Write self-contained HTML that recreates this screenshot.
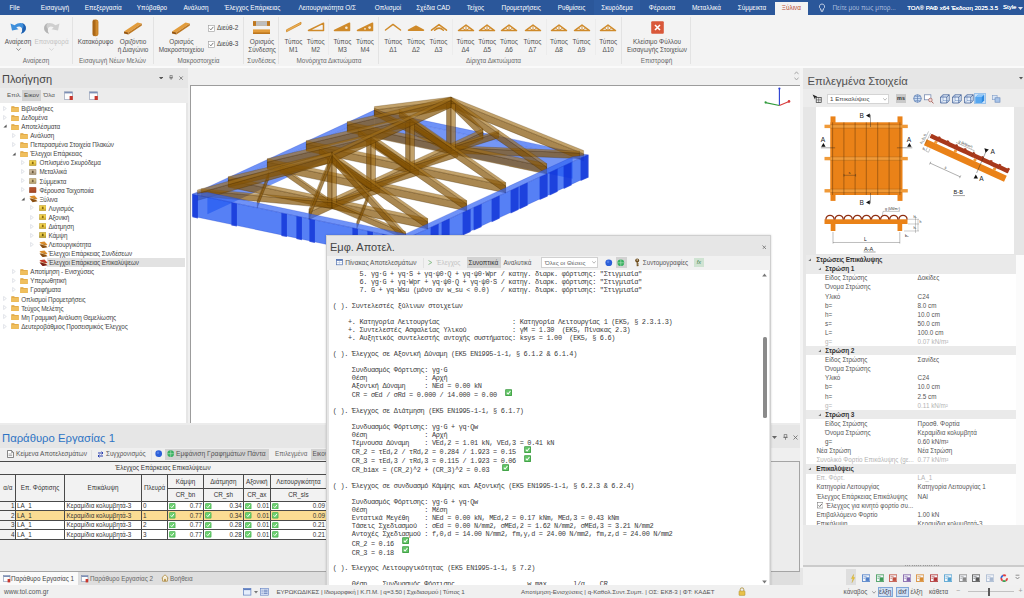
<!DOCTYPE html>
<html lang="el"><head><meta charset="utf-8"><title>ΤΟΛ ΡΑΦ</title><style>
html,body{margin:0;padding:0}
body{width:1024px;height:598px;overflow:hidden;position:relative;background:#e6e6e6;font-family:"Liberation Sans",sans-serif;}
.b{position:absolute;box-sizing:border-box;overflow:hidden}
.t{position:absolute;white-space:nowrap}
.m{position:absolute;white-space:pre;font-family:"Liberation Mono",monospace}
svg{display:block}
svg text{font-family:"Liberation Sans",sans-serif}
</style></head><body>
<div class="b" style="left:0px;top:0px;width:1024px;height:15px;background:#2b579a;"></div>
<div class="b" style="left:594px;top:0px;width:46px;height:15px;background:#2e5ca1;"></div>
<div class="t" style="top:3.6px;font-size:6.4px;line-height:8.0px;color:#fff;left:14.6px;transform:translateX(-50%);">File</div>
<div class="t" style="top:3.6px;font-size:6.4px;line-height:8.0px;color:#fff;left:55px;transform:translateX(-50%);">Εισαγωγή</div>
<div class="t" style="top:3.6px;font-size:6.4px;line-height:8.0px;color:#fff;left:103.2px;transform:translateX(-50%);">Επεξεργασία</div>
<div class="t" style="top:3.6px;font-size:6.4px;line-height:8.0px;color:#fff;left:152px;transform:translateX(-50%);">Υπόβαθρο</div>
<div class="t" style="top:3.6px;font-size:6.4px;line-height:8.0px;color:#fff;left:196px;transform:translateX(-50%);">Ανάλυση</div>
<div class="t" style="top:3.6px;font-size:6.4px;line-height:8.0px;color:#fff;left:252.4px;transform:translateX(-50%);">Έλεγχος Επάρκειας</div>
<div class="t" style="top:3.6px;font-size:6.4px;line-height:8.0px;color:#fff;left:327.2px;transform:translateX(-50%);">Λειτουργικότητα Ο/Σ</div>
<div class="t" style="top:3.6px;font-size:6.4px;line-height:8.0px;color:#fff;left:388px;transform:translateX(-50%);">Οπλισμοί</div>
<div class="t" style="top:3.6px;font-size:6.4px;line-height:8.0px;color:#fff;left:433.2px;transform:translateX(-50%);">Σχέδια CAD</div>
<div class="t" style="top:3.6px;font-size:6.4px;line-height:8.0px;color:#fff;left:475.5px;transform:translateX(-50%);">Τείχος</div>
<div class="t" style="top:3.6px;font-size:6.4px;line-height:8.0px;color:#fff;left:521.2px;transform:translateX(-50%);">Προμετρήσεις</div>
<div class="t" style="top:3.6px;font-size:6.4px;line-height:8.0px;color:#fff;left:571.5px;transform:translateX(-50%);">Ρυθμίσεις</div>
<div class="t" style="top:3.6px;font-size:6.4px;line-height:8.0px;color:#fff;left:617px;transform:translateX(-50%);">Σκυρόδεμα</div>
<div class="t" style="top:3.6px;font-size:6.4px;line-height:8.0px;color:#fff;left:662px;transform:translateX(-50%);">Φέρουσα</div>
<div class="t" style="top:3.6px;font-size:6.4px;line-height:8.0px;color:#fff;left:706.4px;transform:translateX(-50%);">Μεταλλικά</div>
<div class="t" style="top:3.6px;font-size:6.4px;line-height:8.0px;color:#fff;left:752px;transform:translateX(-50%);">Σύμμεικτα</div>
<div class="b" style="left:774.5px;top:1.5px;width:33px;height:14px;background:#f3f3f3;"></div>
<div class="t" style="top:3.8px;font-size:6.4px;line-height:8.0px;color:#b5482f;left:791.4px;transform:translateX(-50%);">Ξύλινα</div>
<svg class="b" style="left:818px;top:3px" width="8" height="10" viewBox="0 0 8 10"><path d="M4 1a2.6 2.6 0 0 0-1.4 4.8v1.4h2.8V5.8A2.6 2.6 0 0 0 4 1zM2.9 8.3h2.2" fill="none" stroke="#dfe6f3" stroke-width=".8"/></svg>
<div class="t" style="top:3.8px;font-size:6.4px;line-height:8.0px;color:#a9bbdd;left:832.5px;">Πείτε μου πως μπορ...</div>
<div class="t" style="top:4.0px;font-size:6.08px;line-height:7.6px;color:#fff;left:907.2px;letter-spacing:0px;text-shadow:0 0 .3px #fff;">ΤΟΛ® ΡΑΦ x64 Έκδοση 2025.3.5</div>
<div class="t" style="top:4.05px;font-size:6px;line-height:7.5px;color:#fff;left:1003px;text-shadow:0 0 .3px #fff;">Style</div>
<svg class="b" style="left:1017.5px;top:6.5px" width="5" height="3" viewBox="0 0 5 3"><path d="M0 0h5L2.5 3z" fill="#dfe6f3"/></svg>
<div class="b" style="left:0px;top:15px;width:1024px;height:51px;background:#f3f3f3;"></div>
<div class="b" style="left:0px;top:66px;width:1024px;height:1.5px;background:#fafafa;"></div>
<div class="b" style="left:72.0px;top:17px;width:1px;height:47px;background:#e3e3e3;"></div>
<div class="b" style="left:152.5px;top:17px;width:1px;height:47px;background:#e3e3e3;"></div>
<div class="b" style="left:243.1px;top:17px;width:1px;height:47px;background:#e3e3e3;"></div>
<div class="b" style="left:278.0px;top:17px;width:1px;height:47px;background:#e3e3e3;"></div>
<div class="b" style="left:378.3px;top:17px;width:1px;height:47px;background:#e3e3e3;"></div>
<div class="b" style="left:620.7px;top:17px;width:1px;height:47px;background:#e3e3e3;"></div>
<div class="b" style="left:689.5px;top:17px;width:1px;height:47px;background:#e3e3e3;"></div>
<div class="b" style="left:328.2px;top:19px;width:1px;height:36px;background:#ececec;"></div>
<div class="b" style="left:451.5px;top:19px;width:1px;height:36px;background:#ececec;"></div>
<div class="b" style="left:545.5px;top:19px;width:1px;height:36px;background:#ececec;"></div>
<div class="b" style="left:594.5px;top:19px;width:1px;height:36px;background:#ececec;"></div>
<div class="t" style="top:56.6px;font-size:6.4px;line-height:8.0px;color:#6a6a6a;left:36px;transform:translateX(-50%);">Αναίρεση</div>
<div class="t" style="top:56.6px;font-size:6.4px;line-height:8.0px;color:#6a6a6a;left:112.5px;transform:translateX(-50%);">Εισαγωγή Νέων Μελών</div>
<div class="t" style="top:56.6px;font-size:6.4px;line-height:8.0px;color:#6a6a6a;left:198.5px;transform:translateX(-50%);">Μακροστοιχεία</div>
<div class="t" style="top:56.6px;font-size:6.4px;line-height:8.0px;color:#6a6a6a;left:261.5px;transform:translateX(-50%);">Συνδέσεις</div>
<div class="t" style="top:56.6px;font-size:6.4px;line-height:8.0px;color:#6a6a6a;left:329px;transform:translateX(-50%);">Μονόριχτα Δικτυώματα</div>
<div class="t" style="top:56.6px;font-size:6.4px;line-height:8.0px;color:#6a6a6a;left:493.5px;transform:translateX(-50%);">Δίριχτα Δικτυώματα</div>
<div class="t" style="top:56.6px;font-size:6.4px;line-height:8.0px;color:#6a6a6a;left:656.5px;transform:translateX(-50%);">Επιστροφή</div>
<svg class="b" style="left:9px;top:20.5px" width="20" height="15" viewBox="0 0 20 15">
<path d="M1.5 2.5 L3 9.5 L9.5 8.2 L7.3 6.6 C9.5 4.6 12.6 5.2 13.2 8 C13.6 10 12.8 11.8 11.8 12.8 C15.6 11.6 17.6 8.6 16.6 5.4 C15.4 1.6 10.2 0.4 5.6 4.2 Z" fill="#3f8fdb"/>
<path d="M13.2 8 C13.6 10 12.8 11.8 11.8 12.8 C15.6 11.6 17.6 8.6 16.6 5.4 C16 3.6 14.6 2.4 13 2 C15 4 15 6 13.2 8Z" fill="#1f5fae"/></svg>
<svg class="b" style="left:42px;top:20.5px" width="20" height="15" viewBox="0 0 20 15">
<path d="M17.5 2.5 L16 9.5 L9.5 8.2 L11.7 6.6 C9.5 4.6 6.4 5.2 5.8 8 C5.4 10 6.2 11.8 7.2 12.8 C3.4 11.6 1.4 8.6 2.4 5.4 C3.6 1.6 8.8 0.4 13.4 4.2 Z" fill="#cfcfcf"/>
<path d="M5.8 8 C5.4 10 6.2 11.8 7.2 12.8 C3.4 11.6 1.4 8.6 2.4 5.4 C3 3.6 4.4 2.4 6 2 C4 4 4 6 5.8 8Z" fill="#b4b4b4"/></svg>
<div class="t" style="top:38.0px;font-size:6.4px;line-height:8.0px;color:#505050;left:18px;transform:translateX(-50%);">Αναίρεση</div>
<div class="t" style="top:38.0px;font-size:6.4px;line-height:8.0px;color:#c4c4c4;left:51.5px;transform:translateX(-50%);">Επαναφορά</div>
<svg class="b" style="left:15.5px;top:48px" width="5" height="3" viewBox="0 0 5 3"><path d="M.3 .3L2.5 2.4L4.7 .3" fill="none" stroke="#666" stroke-width=".7"/></svg>
<svg class="b" style="left:49px;top:48px" width="5" height="3" viewBox="0 0 5 3"><path d="M.3 .3L2.5 2.4L4.7 .3" fill="none" stroke="#ccc" stroke-width=".7"/></svg>
<svg class="b" style="left:91px;top:19px" width="9" height="18" viewBox="0 0 9 18">
<rect x="1.6" y=".6" width="5.8" height="16.6" rx="2.6" fill="#bd7720"/><rect x="1.6" y=".6" width="2.2" height="16.6" rx="1.6" fill="#96560f" opacity=".55"/><rect x="5.2" y="1.5" width="1.4" height="15" rx=".7" fill="#e29c3c" opacity=".6"/></svg>
<svg class="b" style="left:123px;top:20.5px" width="20" height="15" viewBox="0 0 20 15">
<path d="M1 10.5 L14.5 1.5 L18.8 2.6 L5.4 11.6Z" fill="#e29c3c"/><path d="M1 10.5 L5.4 11.6 L5.4 13.6 L1 12.4Z" fill="#96560f"/><path d="M5.4 11.6 L18.8 2.6 L18.8 4.6 L5.4 13.6Z" fill="#bd7720"/></svg>
<svg class="b" style="left:171px;top:20.5px" width="20" height="15" viewBox="0 0 20 15">
<path d="M1 10.5 L14.5 1.5 L18.8 2.6 L5.4 11.6Z" fill="#e29c3c"/><path d="M1 10.5 L5.4 11.6 L5.4 13.6 L1 12.4Z" fill="#96560f"/><path d="M5.4 11.6 L18.8 2.6 L18.8 4.6 L5.4 13.6Z" fill="#bd7720"/></svg>
<div class="t" style="top:38.0px;font-size:6.4px;line-height:8.0px;color:#505050;left:95.5px;transform:translateX(-50%);">Κατακόρυφο</div>
<div class="t" style="top:38.0px;font-size:6.4px;line-height:8.0px;color:#505050;left:133px;transform:translateX(-50%);">Οριζόντιο</div>
<div class="t" style="top:46.0px;font-size:6.4px;line-height:8.0px;color:#505050;left:133px;transform:translateX(-50%);">ή Διαγώνιο</div>
<div class="t" style="top:38.0px;font-size:6.4px;line-height:8.0px;color:#505050;left:181.4px;transform:translateX(-50%);">Ορισμός</div>
<div class="t" style="top:45.8px;font-size:6.4px;line-height:8.0px;color:#505050;left:181.4px;transform:translateX(-50%);">Μακροστοιχείου</div>
<svg class="b" style="left:208px;top:24.5px" width="7" height="7" viewBox="0 0 7 7"><rect x=".4" y=".4" width="6" height="6" fill="#fff" stroke="#9a9a9a" stroke-width=".6"/><path d="M1.6 3.5L2.9 4.8L5.3 1.9" fill="none" stroke="#555" stroke-width=".8"/></svg>
<div class="t" style="top:23.8px;font-size:6.4px;line-height:8.0px;color:#444;left:217px;">Διεύθ-2</div>
<svg class="b" style="left:208px;top:40.900000000000006px" width="7" height="7" viewBox="0 0 7 7"><rect x=".4" y=".4" width="6" height="6" fill="#fff" stroke="#9a9a9a" stroke-width=".6"/><path d="M1.6 3.5L2.9 4.8L5.3 1.9" fill="none" stroke="#555" stroke-width=".8"/></svg>
<div class="t" style="top:40.2px;font-size:6.4px;line-height:8.0px;color:#444;left:217px;">Διεύθ-3</div>
<svg class="b" style="left:252px;top:20px" width="19" height="16" viewBox="0 0 19 16">
<rect x="1" y="1.2" width="17" height="4.6" fill="#e29c3c"/><rect x="4" y="1.2" width="11" height="4.6" fill="#bdbdbd"/><rect x="1" y="1.2" width="3" height="4.6" fill="#bd7720"/><rect x="15" y="1.2" width="3" height="4.6" fill="#bd7720"/>
<rect x="1" y="9.4" width="17" height="4.6" fill="#e29c3c"/><rect x="1" y="12.4" width="17" height="1.6" fill="#bd7720"/></svg>
<div class="t" style="top:38.0px;font-size:6.4px;line-height:8.0px;color:#505050;left:262px;transform:translateX(-50%);">Ορισμός</div>
<div class="t" style="top:45.8px;font-size:6.4px;line-height:8.0px;color:#505050;left:262px;transform:translateX(-50%);">Σύνδεσης</div>
<svg class="b" style="left:284.5px;top:20px" width="18" height="14" viewBox="0 0 18 14"><path d="M1.5 9.8L16 2.2L16 4.2L1.5 11.8Z" fill="#eeb055" stroke="#cf8a2a" stroke-width=".8"/></svg>
<div class="t" style="top:38.0px;font-size:6.4px;line-height:8.0px;color:#505050;left:293.5px;transform:translateX(-50%);">Τύπος</div>
<div class="t" style="top:45.8px;font-size:6.4px;line-height:8.0px;color:#505050;left:293.5px;transform:translateX(-50%);">M1</div>
<svg class="b" style="left:306.7px;top:20px" width="18" height="14" viewBox="0 0 18 14"><path d="M1.5 10.5L16.5 3.2V10.5Z" stroke="#cf8a2a" stroke-width="1.5" fill="none" stroke-linejoin="round" stroke-linecap="round"/></svg>
<div class="t" style="top:38.0px;font-size:6.4px;line-height:8.0px;color:#505050;left:315.7px;transform:translateX(-50%);">Τύπος</div>
<div class="t" style="top:45.8px;font-size:6.4px;line-height:8.0px;color:#505050;left:315.7px;transform:translateX(-50%);">M2</div>
<svg class="b" style="left:333.4px;top:20px" width="18" height="14" viewBox="0 0 18 14"><path d="M1.5 10.5L16.5 3.2V10.5Z" fill="#cf8a2a" stroke="#cf8a2a" stroke-width="1.5"  stroke-linejoin="round" stroke-linecap="round"/><circle cx="13.4" cy="7.8" r="1.3" fill="#f6ead6"/></svg>
<div class="t" style="top:38.0px;font-size:6.4px;line-height:8.0px;color:#505050;left:342.4px;transform:translateX(-50%);">Τύπος</div>
<div class="t" style="top:45.8px;font-size:6.4px;line-height:8.0px;color:#505050;left:342.4px;transform:translateX(-50%);">M3</div>
<svg class="b" style="left:356px;top:20px" width="18" height="14" viewBox="0 0 18 14"><path d="M1.5 10.5L16.5 3.2V10.5Z" fill="#cf8a2a" stroke="#cf8a2a" stroke-width="1.5"  stroke-linejoin="round" stroke-linecap="round"/><circle cx="13.6" cy="7.6" r="1.3" fill="#f6ead6"/><circle cx="9" cy="8.8" r=".9" fill="#f6ead6"/></svg>
<div class="t" style="top:38.0px;font-size:6.4px;line-height:8.0px;color:#505050;left:365px;transform:translateX(-50%);">Τύπος</div>
<div class="t" style="top:45.8px;font-size:6.4px;line-height:8.0px;color:#505050;left:365px;transform:translateX(-50%);">M4</div>
<svg class="b" style="left:384.2px;top:20px" width="18" height="14" viewBox="0 0 18 14"><path d="M1.5 10L9 4.4L16.5 10" stroke="#cf8a2a" stroke-width="1.5" fill="none" stroke-linejoin="round" stroke-linecap="round"/></svg>
<div class="t" style="top:38.0px;font-size:6.4px;line-height:8.0px;color:#505050;left:393.2px;transform:translateX(-50%);">Τύπος</div>
<div class="t" style="top:45.8px;font-size:6.4px;line-height:8.0px;color:#505050;left:393.2px;transform:translateX(-50%);">Δ1</div>
<svg class="b" style="left:407px;top:20px" width="18" height="14" viewBox="0 0 18 14"><path d="M1.5 10.2L9 6.2L16.5 10.2Z" fill="#cf8a2a" stroke="#cf8a2a" stroke-width="1.5"  stroke-linejoin="round" stroke-linecap="round"/></svg>
<div class="t" style="top:38.0px;font-size:6.4px;line-height:8.0px;color:#505050;left:416px;transform:translateX(-50%);">Τύπος</div>
<div class="t" style="top:45.8px;font-size:6.4px;line-height:8.0px;color:#505050;left:416px;transform:translateX(-50%);">Δ2</div>
<svg class="b" style="left:429.5px;top:20px" width="18" height="14" viewBox="0 0 18 14"><path d="M1.5 10.2L9 4.6L16.5 10.2M4.6 10.2Q9 6 13.4 10.2" stroke="#cf8a2a" stroke-width="1.5" fill="none" stroke-linejoin="round" stroke-linecap="round"/></svg>
<div class="t" style="top:38.0px;font-size:6.4px;line-height:8.0px;color:#505050;left:438.5px;transform:translateX(-50%);">Τύπος</div>
<div class="t" style="top:45.8px;font-size:6.4px;line-height:8.0px;color:#505050;left:438.5px;transform:translateX(-50%);">Δ3</div>
<svg class="b" style="left:456.5px;top:20px" width="18" height="14" viewBox="0 0 18 14"><path d="M1.5 10.6L9 5L16.5 10.6Z" stroke="#cf8a2a" stroke-width="1.5" fill="none" stroke-linejoin="round" stroke-linecap="round"/><path d="M9 5V10.6M5.2 7.8L9 10.6L12.8 7.8" stroke="#cf8a2a" stroke-width=".9" fill="none"/></svg>
<div class="t" style="top:38.0px;font-size:6.4px;line-height:8.0px;color:#505050;left:465.5px;transform:translateX(-50%);">Τύπος</div>
<div class="t" style="top:45.8px;font-size:6.4px;line-height:8.0px;color:#505050;left:465.5px;transform:translateX(-50%);">Δ4</div>
<svg class="b" style="left:478.2px;top:20px" width="18" height="14" viewBox="0 0 18 14"><path d="M1.5 10.6L9 5L16.5 10.6Z" stroke="#cf8a2a" stroke-width="1.5" fill="none" stroke-linejoin="round" stroke-linecap="round"/><path d="M9 5V10.6M5.2 7.8L9 10.6L12.8 7.8" stroke="#cf8a2a" stroke-width=".9" fill="none"/></svg>
<div class="t" style="top:38.0px;font-size:6.4px;line-height:8.0px;color:#505050;left:487.2px;transform:translateX(-50%);">Τύπος</div>
<div class="t" style="top:45.8px;font-size:6.4px;line-height:8.0px;color:#505050;left:487.2px;transform:translateX(-50%);">Δ5</div>
<svg class="b" style="left:500px;top:20px" width="18" height="14" viewBox="0 0 18 14"><path d="M1.5 10.6L9 5L16.5 10.6Z" stroke="#cf8a2a" stroke-width="1.5" fill="none" stroke-linejoin="round" stroke-linecap="round"/><path d="M9 5V10.6M5.2 7.8L9 10.6L12.8 7.8" stroke="#cf8a2a" stroke-width=".9" fill="none"/></svg>
<div class="t" style="top:38.0px;font-size:6.4px;line-height:8.0px;color:#505050;left:509px;transform:translateX(-50%);">Τύπος</div>
<div class="t" style="top:45.8px;font-size:6.4px;line-height:8.0px;color:#505050;left:509px;transform:translateX(-50%);">Δ6</div>
<svg class="b" style="left:523.5px;top:20px" width="18" height="14" viewBox="0 0 18 14"><path d="M1.5 10.6L9 5L16.5 10.6Z" stroke="#cf8a2a" stroke-width="1.5" fill="none" stroke-linejoin="round" stroke-linecap="round"/><path d="M9 5V10.6M5.2 7.8L9 10.6L12.8 7.8" stroke="#cf8a2a" stroke-width=".9" fill="none"/></svg>
<div class="t" style="top:38.0px;font-size:6.4px;line-height:8.0px;color:#505050;left:532.5px;transform:translateX(-50%);">Τύπος</div>
<div class="t" style="top:45.8px;font-size:6.4px;line-height:8.0px;color:#505050;left:532.5px;transform:translateX(-50%);">Δ7</div>
<svg class="b" style="left:550px;top:20px" width="18" height="14" viewBox="0 0 18 14"><path d="M1.5 10.6L9 5L16.5 10.6Z" stroke="#cf8a2a" stroke-width="1.5" fill="none" stroke-linejoin="round" stroke-linecap="round"/><path d="M9 5V10.6M5.2 7.8L9 10.6L12.8 7.8" stroke="#cf8a2a" stroke-width=".9" fill="none"/></svg>
<div class="t" style="top:38.0px;font-size:6.4px;line-height:8.0px;color:#505050;left:559px;transform:translateX(-50%);">Τύπος</div>
<div class="t" style="top:45.8px;font-size:6.4px;line-height:8.0px;color:#505050;left:559px;transform:translateX(-50%);">Δ8</div>
<svg class="b" style="left:572.5px;top:20px" width="18" height="14" viewBox="0 0 18 14"><path d="M1.5 10.6L9 5L16.5 10.6Z" stroke="#cf8a2a" stroke-width="1.5" fill="none" stroke-linejoin="round" stroke-linecap="round"/><path d="M9 5V10.6M5.2 7.8L9 10.6L12.8 7.8" stroke="#cf8a2a" stroke-width=".9" fill="none"/></svg>
<div class="t" style="top:38.0px;font-size:6.4px;line-height:8.0px;color:#505050;left:581.5px;transform:translateX(-50%);">Τύπος</div>
<div class="t" style="top:45.8px;font-size:6.4px;line-height:8.0px;color:#505050;left:581.5px;transform:translateX(-50%);">Δ9</div>
<svg class="b" style="left:599.2px;top:20px" width="18" height="14" viewBox="0 0 18 14"><path d="M1.5 10.6L9 5L16.5 10.6Z" stroke="#cf8a2a" stroke-width="1.5" fill="none" stroke-linejoin="round" stroke-linecap="round"/><path d="M9 5V10.6M5.2 7.8L9 10.6L12.8 7.8" stroke="#cf8a2a" stroke-width=".9" fill="none"/></svg>
<div class="t" style="top:38.0px;font-size:6.4px;line-height:8.0px;color:#505050;left:608.2px;transform:translateX(-50%);">Τύπος</div>
<div class="t" style="top:45.8px;font-size:6.4px;line-height:8.0px;color:#505050;left:608.2px;transform:translateX(-50%);">Δ10</div>
<svg class="b" style="left:650.5px;top:21px" width="13" height="13" viewBox="0 0 13 13"><rect x=".2" y=".2" width="12.6" height="12.6" rx="1" fill="#d9583a"/><path d="M4 4L9 9M9 4L4 9" stroke="#fff" stroke-width="1.6"/></svg>
<div class="t" style="top:38.0px;font-size:6.4px;line-height:8.0px;color:#505050;left:657px;transform:translateX(-50%);">Κλείσιμο Φύλλου</div>
<div class="t" style="top:45.8px;font-size:6.4px;line-height:8.0px;color:#505050;left:657px;transform:translateX(-50%);">Εισαγωγής Στοιχείων</div>
<div class="b" style="left:0px;top:67.5px;width:187.5px;height:356px;background:#e6e6e6;"></div>
<div class="b" style="left:187.5px;top:67.5px;width:615px;height:17px;background:#f0f0f0;"></div>
<div class="b" style="left:187.5px;top:84px;width:3px;height:339.5px;background:#f0f0f0;"></div>
<div class="t" style="top:72.72px;font-size:11px;line-height:13.75px;color:#444;left:2px;">Πλοήγηση</div>
<svg class="b" style="left:159px;top:76.8px" width="4.2" height="2.6" viewBox="0 0 5 3"><path d="M0 0h5L2.5 3z" fill="#555"/></svg>
<svg class="b" style="left:169.4px;top:75.4px" width="4.2" height="5" viewBox="0 0 5 6"><path d="M1.2 .4h2.6v3H1.2zM.3 3.4h4.4M2.5 3.4v2.4" fill="none" stroke="#555" stroke-width=".7"/></svg>
<svg class="b" style="left:179.4px;top:76px" width="4.2" height="4.2" viewBox="0 0 5 5"><path d="M.5 .5L4.5 4.5M4.5 .5L.5 4.5" stroke="#555" stroke-width=".8"/></svg>
<div class="b" style="left:0px;top:88px;width:187.5px;height:14.5px;background:#ececec;"></div>
<div class="b" style="left:22px;top:90px;width:18.5px;height:10.5px;background:#d2d2d2;"></div>
<div class="t" style="top:91.42px;font-size:6.2px;line-height:7.75px;color:#555;left:7px;">Επιλ.</div>
<div class="t" style="top:91.42px;font-size:6.2px;line-height:7.75px;color:#444;left:24px;">Εικον</div>
<div class="t" style="top:91.42px;font-size:6.2px;line-height:7.75px;color:#555;left:43.5px;">Όλα</div>
<svg class="b" style="left:64px;top:90.5px" width="10" height="10" viewBox="0 0 10 10"><rect x=".5" y=".8" width="8" height="7.6" fill="#fdfdfd" stroke="#8a96b0" stroke-width=".6"/><rect x=".5" y=".8" width="8" height="1.6" fill="#7d8fb5"/><rect x="5.6" y="5" width="3.2" height="4" fill="#c8372d"/></svg>
<svg class="b" style="left:88.5px;top:90.5px" width="10" height="10" viewBox="0 0 10 10"><rect x=".5" y=".8" width="8" height="7.6" fill="#fdfdfd" stroke="#8a96b0" stroke-width=".6"/><rect x=".5" y=".8" width="8" height="1.6" fill="#7d8fb5"/><rect x="5.6" y="5" width="3.2" height="4" fill="#c8372d"/></svg>
<div class="b" style="left:0px;top:102.5px;width:186px;height:321px;background:#fff;"></div>
<svg class="b" style="left:2.8px;top:105.6px" width="4" height="5" viewBox="0 0 4 5"><path d="M.6 .5L3.3 2.5L.6 4.5Z" fill="none" stroke="#c9ced6" stroke-width=".55"/></svg>
<svg class="b" style="left:11.2px;top:104.5px" width="8" height="7.2" viewBox="0 0 8 7.2"><path d="M.3 1.2h2.8l.7.8h3.9v4.9H.3z" fill="#dba13c"/><rect x=".3" y="2.6" width="7.4" height="4.3" fill="#f0bf5e"/></svg>
<div class="t" style="top:104.86px;font-size:6.3px;line-height:7.88px;color:#444;left:21.2px;letter-spacing:-.12px;">Βιβλιοθήκες</div>
<svg class="b" style="left:2.8px;top:114.67999999999999px" width="4" height="5" viewBox="0 0 4 5"><path d="M.6 .5L3.3 2.5L.6 4.5Z" fill="none" stroke="#c9ced6" stroke-width=".55"/></svg>
<svg class="b" style="left:11.2px;top:113.58px" width="8" height="7.2" viewBox="0 0 8 7.2"><path d="M.3 1.2h2.8l.7.8h3.9v4.9H.3z" fill="#dba13c"/><rect x=".3" y="2.6" width="7.4" height="4.3" fill="#f0bf5e"/></svg>
<div class="t" style="top:113.94px;font-size:6.3px;line-height:7.88px;color:#444;left:21.2px;letter-spacing:-.12px;">Δεδομένα</div>
<svg class="b" style="left:2.8px;top:124.25999999999999px" width="4" height="4" viewBox="0 0 4 4"><path d="M3.6 .4V3.6H.4Z" fill="#555"/></svg>
<svg class="b" style="left:11.2px;top:122.66px" width="8" height="7.2" viewBox="0 0 8 7.2"><path d="M.3 1.2h2.8l.7.8h3.9v4.9H.3z" fill="#dba13c"/><rect x=".3" y="2.6" width="7.4" height="4.3" fill="#f0bf5e"/></svg>
<div class="t" style="top:123.02px;font-size:6.3px;line-height:7.88px;color:#444;left:21.2px;letter-spacing:-.12px;">Αποτελέσματα</div>
<svg class="b" style="left:11.899999999999999px;top:132.84px" width="4" height="5" viewBox="0 0 4 5"><path d="M.6 .5L3.3 2.5L.6 4.5Z" fill="none" stroke="#c9ced6" stroke-width=".55"/></svg>
<svg class="b" style="left:20.299999999999997px;top:131.74px" width="8" height="7.2" viewBox="0 0 8 7.2"><path d="M.3 1.2h2.8l.7.8h3.9v4.9H.3z" fill="#dba13c"/><rect x=".3" y="2.6" width="7.4" height="4.3" fill="#f0bf5e"/></svg>
<div class="t" style="top:132.1px;font-size:6.3px;line-height:7.88px;color:#444;left:30.299999999999997px;letter-spacing:-.12px;">Ανάλυση</div>
<svg class="b" style="left:11.899999999999999px;top:141.92px" width="4" height="5" viewBox="0 0 4 5"><path d="M.6 .5L3.3 2.5L.6 4.5Z" fill="none" stroke="#c9ced6" stroke-width=".55"/></svg>
<svg class="b" style="left:20.299999999999997px;top:140.82px" width="8" height="7.2" viewBox="0 0 8 7.2"><path d="M.3 1.2h2.8l.7.8h3.9v4.9H.3z" fill="#dba13c"/><rect x=".3" y="2.6" width="7.4" height="4.3" fill="#f0bf5e"/></svg>
<div class="t" style="top:141.18px;font-size:6.3px;line-height:7.88px;color:#444;left:30.299999999999997px;letter-spacing:-.12px;">Πεπερασμένα Στοιχεία Πλακών</div>
<svg class="b" style="left:11.899999999999999px;top:151.5px" width="4" height="4" viewBox="0 0 4 4"><path d="M3.6 .4V3.6H.4Z" fill="#555"/></svg>
<svg class="b" style="left:20.299999999999997px;top:149.9px" width="8" height="7.2" viewBox="0 0 8 7.2"><path d="M.3 1.2h2.8l.7.8h3.9v4.9H.3z" fill="#dba13c"/><rect x=".3" y="2.6" width="7.4" height="4.3" fill="#f0bf5e"/></svg>
<div class="t" style="top:150.26px;font-size:6.3px;line-height:7.88px;color:#444;left:30.299999999999997px;letter-spacing:-.12px;">Έλεγχοι Επάρκειας</div>
<svg class="b" style="left:21.0px;top:160.07999999999998px" width="4" height="5" viewBox="0 0 4 5"><path d="M.6 .5L3.3 2.5L.6 4.5Z" fill="none" stroke="#c9ced6" stroke-width=".55"/></svg>
<svg class="b" style="left:29.4px;top:159.57999999999998px" width="7.4" height="6" viewBox="0 0 7.4 6"><rect x=".3" y=".3" width="6.8" height="5.4" rx=".5" fill="#f2d24e" stroke="#8a6a10" stroke-width=".45" stroke-opacity=".7"/><rect x=".3" y="3.6" width="6.8" height="2.1" fill="#8a6a10" opacity=".25"/><rect x="2.9" y="1.7" width="1.7" height="2.4" fill="#8a6a10"/></svg>
<div class="t" style="top:159.34px;font-size:6.3px;line-height:7.88px;color:#444;left:39.4px;letter-spacing:-.12px;">Οπλισμένο Σκυρόδεμα</div>
<svg class="b" style="left:21.0px;top:169.16px" width="4" height="5" viewBox="0 0 4 5"><path d="M.6 .5L3.3 2.5L.6 4.5Z" fill="none" stroke="#c9ced6" stroke-width=".55"/></svg>
<svg class="b" style="left:29.4px;top:168.66px" width="7.4" height="6" viewBox="0 0 7.4 6"><rect x=".3" y=".3" width="6.8" height="5.4" rx=".5" fill="#c9b79a" stroke="#6b5a3e" stroke-width=".45" stroke-opacity=".7"/><rect x=".3" y="3.6" width="6.8" height="2.1" fill="#6b5a3e" opacity=".25"/><rect x="2.9" y="1.7" width="1.7" height="2.4" fill="#6b5a3e"/></svg>
<div class="t" style="top:168.42px;font-size:6.3px;line-height:7.88px;color:#444;left:39.4px;letter-spacing:-.12px;">Μεταλλικά</div>
<svg class="b" style="left:21.0px;top:178.24px" width="4" height="5" viewBox="0 0 4 5"><path d="M.6 .5L3.3 2.5L.6 4.5Z" fill="none" stroke="#c9ced6" stroke-width=".55"/></svg>
<svg class="b" style="left:29.4px;top:177.74px" width="7.4" height="6" viewBox="0 0 7.4 6"><rect x=".3" y=".3" width="6.8" height="5.4" rx=".5" fill="#d4bf8a" stroke="#75623e" stroke-width=".45" stroke-opacity=".7"/><rect x=".3" y="3.6" width="6.8" height="2.1" fill="#75623e" opacity=".25"/><rect x="2.9" y="1.7" width="1.7" height="2.4" fill="#75623e"/></svg>
<div class="t" style="top:177.5px;font-size:6.3px;line-height:7.88px;color:#444;left:39.4px;letter-spacing:-.12px;">Σύμμεικτα</div>
<svg class="b" style="left:21.0px;top:187.32px" width="4" height="5" viewBox="0 0 4 5"><path d="M.6 .5L3.3 2.5L.6 4.5Z" fill="none" stroke="#c9ced6" stroke-width=".55"/></svg>
<svg class="b" style="left:29.4px;top:186.82px" width="7.4" height="6" viewBox="0 0 7.4 6"><rect x=".3" y=".3" width="6.8" height="5.4" rx=".5" fill="#b5532c" stroke="#7a2f16" stroke-width=".45" stroke-opacity=".7"/><rect x=".3" y="3.6" width="6.8" height="2.1" fill="#7a2f16" opacity=".25"/></svg>
<div class="t" style="top:186.58px;font-size:6.3px;line-height:7.88px;color:#444;left:39.4px;letter-spacing:-.12px;">Φέρουσα Τοιχοποιία</div>
<svg class="b" style="left:21.0px;top:196.89999999999998px" width="4" height="4" viewBox="0 0 4 4"><path d="M3.6 .4V3.6H.4Z" fill="#555"/></svg>
<svg class="b" style="left:29.4px;top:195.09999999999997px" width="9" height="7.6" viewBox="0 0 9 7.6"><path d="M.5 1.2L5.5 .4L8.5 3.8L3.6 4.8Z" fill="#d98c2b"/><path d="M.5 3.6L5.2 3L8.5 6.2L3.6 7.2Z" fill="#8a4f12"/><path d="M.8 2.6L8 5" stroke="#f3d9a4" stroke-width=".7"/></svg>
<div class="t" style="top:195.66px;font-size:6.3px;line-height:7.88px;color:#444;left:39.4px;letter-spacing:-.12px;">Ξύλινα</div>
<svg class="b" style="left:30.099999999999994px;top:205.48px" width="4" height="5" viewBox="0 0 4 5"><path d="M.6 .5L3.3 2.5L.6 4.5Z" fill="none" stroke="#c9ced6" stroke-width=".55"/></svg>
<svg class="b" style="left:38.5px;top:204.98px" width="7.4" height="6" viewBox="0 0 7.4 6"><rect x=".3" y=".3" width="6.8" height="5.4" rx=".5" fill="#f2d24e" stroke="#8a6a10" stroke-width=".45" stroke-opacity=".7"/><rect x=".3" y="3.6" width="6.8" height="2.1" fill="#8a6a10" opacity=".25"/><rect x="2.9" y="1.7" width="1.7" height="2.4" fill="#8a6a10"/></svg>
<div class="t" style="top:204.74px;font-size:6.3px;line-height:7.88px;color:#444;left:48.5px;letter-spacing:-.12px;">Λυγισμός</div>
<svg class="b" style="left:30.099999999999994px;top:214.56px" width="4" height="5" viewBox="0 0 4 5"><path d="M.6 .5L3.3 2.5L.6 4.5Z" fill="none" stroke="#c9ced6" stroke-width=".55"/></svg>
<svg class="b" style="left:38.5px;top:214.06px" width="7.4" height="6" viewBox="0 0 7.4 6"><rect x=".3" y=".3" width="6.8" height="5.4" rx=".5" fill="#f2d24e" stroke="#8a6a10" stroke-width=".45" stroke-opacity=".7"/><rect x=".3" y="3.6" width="6.8" height="2.1" fill="#8a6a10" opacity=".25"/><rect x="2.9" y="1.7" width="1.7" height="2.4" fill="#8a6a10"/></svg>
<div class="t" style="top:213.82px;font-size:6.3px;line-height:7.88px;color:#444;left:48.5px;letter-spacing:-.12px;">Αξονική</div>
<svg class="b" style="left:30.099999999999994px;top:223.64px" width="4" height="5" viewBox="0 0 4 5"><path d="M.6 .5L3.3 2.5L.6 4.5Z" fill="none" stroke="#c9ced6" stroke-width=".55"/></svg>
<svg class="b" style="left:38.5px;top:223.14px" width="7.4" height="6" viewBox="0 0 7.4 6"><rect x=".3" y=".3" width="6.8" height="5.4" rx=".5" fill="#f2d24e" stroke="#8a6a10" stroke-width=".45" stroke-opacity=".7"/><rect x=".3" y="3.6" width="6.8" height="2.1" fill="#8a6a10" opacity=".25"/><rect x="2.9" y="1.7" width="1.7" height="2.4" fill="#8a6a10"/></svg>
<div class="t" style="top:222.9px;font-size:6.3px;line-height:7.88px;color:#444;left:48.5px;letter-spacing:-.12px;">Διάτμηση</div>
<svg class="b" style="left:30.099999999999994px;top:232.72px" width="4" height="5" viewBox="0 0 4 5"><path d="M.6 .5L3.3 2.5L.6 4.5Z" fill="none" stroke="#c9ced6" stroke-width=".55"/></svg>
<svg class="b" style="left:38.5px;top:232.22px" width="7.4" height="6" viewBox="0 0 7.4 6"><rect x=".3" y=".3" width="6.8" height="5.4" rx=".5" fill="#e8c84a" stroke="#6a5a10" stroke-width=".45" stroke-opacity=".7"/><rect x=".3" y="3.6" width="6.8" height="2.1" fill="#6a5a10" opacity=".25"/><rect x="2.9" y="1.7" width="1.7" height="2.4" fill="#6a5a10"/></svg>
<div class="t" style="top:231.98px;font-size:6.3px;line-height:7.88px;color:#444;left:48.5px;letter-spacing:-.12px;">Κάμψη</div>
<svg class="b" style="left:30.099999999999994px;top:241.79999999999998px" width="4" height="5" viewBox="0 0 4 5"><path d="M.6 .5L3.3 2.5L.6 4.5Z" fill="none" stroke="#c9ced6" stroke-width=".55"/></svg>
<svg class="b" style="left:38.5px;top:240.49999999999997px" width="9" height="7.6" viewBox="0 0 9 7.6"><path d="M.5 1.2L5.5 .4L8.5 3.8L3.6 4.8Z" fill="#d98c2b"/><path d="M.5 3.6L5.2 3L8.5 6.2L3.6 7.2Z" fill="#8a4f12"/><path d="M.8 2.6L8 5" stroke="#f3d9a4" stroke-width=".7"/></svg>
<div class="t" style="top:241.06px;font-size:6.3px;line-height:7.88px;color:#444;left:48.5px;letter-spacing:-.12px;">Λειτουργικότητα</div>
<svg class="b" style="left:38.5px;top:249.57999999999998px" width="9" height="7.6" viewBox="0 0 9 7.6"><path d="M.5 1.2L5.5 .4L8.5 3.8L3.6 4.8Z" fill="#d98c2b"/><path d="M.5 3.6L5.2 3L8.5 6.2L3.6 7.2Z" fill="#8a4f12"/><path d="M.8 2.6L8 5" stroke="#f3d9a4" stroke-width=".7"/></svg>
<div class="t" style="top:250.14px;font-size:6.3px;line-height:7.88px;color:#444;left:48.5px;letter-spacing:-.12px;">Έλεγχοι Επάρκειας Συνδέσεων</div>
<div class="b" style="left:47px;top:257.86px;width:137.5px;height:9.2px;background:#e2e2e2;"></div>
<svg class="b" style="left:38.5px;top:258.66px" width="9" height="7.6" viewBox="0 0 9 7.6"><path d="M.5 1.2L5.5 .4L8.5 3.8L3.6 4.8Z" fill="#c0392b"/><path d="M.5 3.6L5.2 3L8.5 6.2L3.6 7.2Z" fill="#7a1f14"/><path d="M.8 2.6L8 5" stroke="#f3d9a4" stroke-width=".7"/></svg>
<div class="t" style="top:259.22px;font-size:6.3px;line-height:7.88px;color:#444;left:48.5px;letter-spacing:-.12px;">Έλεγχοι Επάρκειας Επικαλύψεων</div>
<svg class="b" style="left:11.899999999999999px;top:269.03999999999996px" width="4" height="5" viewBox="0 0 4 5"><path d="M.6 .5L3.3 2.5L.6 4.5Z" fill="none" stroke="#c9ced6" stroke-width=".55"/></svg>
<svg class="b" style="left:20.299999999999997px;top:267.93999999999994px" width="8" height="7.2" viewBox="0 0 8 7.2"><path d="M.3 1.2h2.8l.7.8h3.9v4.9H.3z" fill="#dba13c"/><rect x=".3" y="2.6" width="7.4" height="4.3" fill="#f0bf5e"/></svg>
<div class="t" style="top:268.3px;font-size:6.3px;line-height:7.88px;color:#444;left:30.299999999999997px;letter-spacing:-.12px;">Αποτίμηση - Ενισχύσεις</div>
<svg class="b" style="left:11.899999999999999px;top:278.12px" width="4" height="5" viewBox="0 0 4 5"><path d="M.6 .5L3.3 2.5L.6 4.5Z" fill="none" stroke="#c9ced6" stroke-width=".55"/></svg>
<svg class="b" style="left:20.299999999999997px;top:277.02px" width="8" height="7.2" viewBox="0 0 8 7.2"><path d="M.3 1.2h2.8l.7.8h3.9v4.9H.3z" fill="#dba13c"/><rect x=".3" y="2.6" width="7.4" height="4.3" fill="#f0bf5e"/></svg>
<div class="t" style="top:277.38px;font-size:6.3px;line-height:7.88px;color:#444;left:30.299999999999997px;letter-spacing:-.12px;">Υπερωθητική</div>
<svg class="b" style="left:11.899999999999999px;top:287.2px" width="4" height="5" viewBox="0 0 4 5"><path d="M.6 .5L3.3 2.5L.6 4.5Z" fill="none" stroke="#c9ced6" stroke-width=".55"/></svg>
<svg class="b" style="left:20.299999999999997px;top:286.09999999999997px" width="8" height="7.2" viewBox="0 0 8 7.2"><path d="M.3 1.2h2.8l.7.8h3.9v4.9H.3z" fill="#dba13c"/><rect x=".3" y="2.6" width="7.4" height="4.3" fill="#f0bf5e"/></svg>
<div class="t" style="top:286.46px;font-size:6.3px;line-height:7.88px;color:#444;left:30.299999999999997px;letter-spacing:-.12px;">Γραφήματα</div>
<svg class="b" style="left:2.8px;top:296.28px" width="4" height="5" viewBox="0 0 4 5"><path d="M.6 .5L3.3 2.5L.6 4.5Z" fill="none" stroke="#c9ced6" stroke-width=".55"/></svg>
<svg class="b" style="left:11.2px;top:295.17999999999995px" width="8" height="7.2" viewBox="0 0 8 7.2"><path d="M.3 1.2h2.8l.7.8h3.9v4.9H.3z" fill="#dba13c"/><rect x=".3" y="2.6" width="7.4" height="4.3" fill="#f0bf5e"/></svg>
<div class="t" style="top:295.54px;font-size:6.3px;line-height:7.88px;color:#444;left:21.2px;letter-spacing:-.12px;">Οπλισμοί Προμετρήσεις</div>
<svg class="b" style="left:2.8px;top:305.36px" width="4" height="5" viewBox="0 0 4 5"><path d="M.6 .5L3.3 2.5L.6 4.5Z" fill="none" stroke="#c9ced6" stroke-width=".55"/></svg>
<svg class="b" style="left:11.2px;top:304.26px" width="8" height="7.2" viewBox="0 0 8 7.2"><path d="M.3 1.2h2.8l.7.8h3.9v4.9H.3z" fill="#dba13c"/><rect x=".3" y="2.6" width="7.4" height="4.3" fill="#f0bf5e"/></svg>
<div class="t" style="top:304.62px;font-size:6.3px;line-height:7.88px;color:#444;left:21.2px;letter-spacing:-.12px;">Τεύχος Μελέτης</div>
<svg class="b" style="left:2.8px;top:314.44px" width="4" height="5" viewBox="0 0 4 5"><path d="M.6 .5L3.3 2.5L.6 4.5Z" fill="none" stroke="#c9ced6" stroke-width=".55"/></svg>
<svg class="b" style="left:11.2px;top:313.34px" width="8" height="7.2" viewBox="0 0 8 7.2"><path d="M.3 1.2h2.8l.7.8h3.9v4.9H.3z" fill="#dba13c"/><rect x=".3" y="2.6" width="7.4" height="4.3" fill="#f0bf5e"/></svg>
<div class="t" style="top:313.7px;font-size:6.3px;line-height:7.88px;color:#444;left:21.2px;letter-spacing:-.12px;">Μη Γραμμική Ανάλυση Θεμελίωσης</div>
<svg class="b" style="left:2.8px;top:323.52px" width="4" height="5" viewBox="0 0 4 5"><path d="M.6 .5L3.3 2.5L.6 4.5Z" fill="none" stroke="#c9ced6" stroke-width=".55"/></svg>
<svg class="b" style="left:11.2px;top:322.41999999999996px" width="8" height="7.2" viewBox="0 0 8 7.2"><path d="M.3 1.2h2.8l.7.8h3.9v4.9H.3z" fill="#dba13c"/><rect x=".3" y="2.6" width="7.4" height="4.3" fill="#f0bf5e"/></svg>
<div class="t" style="top:322.78px;font-size:6.3px;line-height:7.88px;color:#444;left:21.2px;letter-spacing:-.12px;">Δευτεροβάθμιος Προσεισμικός Έλεγχος</div>
<div class="b" style="left:190px;top:84.5px;width:610px;height:339px;background:#fff;border-top:1.6px solid #9c9c9c;border-left:1.6px solid #9c9c9c;"></div>
<svg class="b" style="left:190px;top:84.5px" width="610" height="339" viewBox="0 0 610 339"><polygon points="17.4,107.3 184.4,30.2 184.4,52.2 17.4,129.3" fill="rgba(30,85,240,.62)"/><polygon points="2.4,109.2 184.4,25.1 184.4,30.2 17.4,107.3" fill="rgba(50,100,244,.7)" stroke="rgba(20,50,190,.7)" stroke-width="0.3"/><polygon points="184.4,30.2 382.6,71.8 382.6,93.8 184.4,52.2" fill="rgba(30,85,240,.62)"/><polygon points="184.4,25.1 397.6,69.9 382.6,71.8 184.4,30.2" fill="rgba(50,100,244,.7)" stroke="rgba(20,50,190,.7)" stroke-width="0.3"/><polygon points="261.0,15.4 184.4,25.0 184.4,32.0 261.0,22.4" fill="rgba(132,84,6,.7)" stroke="rgba(70,42,4,.72)" stroke-width=".45"/><polygon points="261.0,12.0 184.4,21.6 184.4,25.0 261.0,15.4" fill="rgba(160,110,24,.64)" stroke="rgba(70,42,4,.72)" stroke-width=".3"/><polygon points="261.0,15.4 393.6,68.9 393.6,75.9 261.0,22.4" fill="rgba(132,84,6,.7)" stroke="rgba(70,42,4,.72)" stroke-width=".45"/><polygon points="261.0,12.0 393.6,65.5 393.6,68.9 261.0,15.4" fill="rgba(160,110,24,.64)" stroke="rgba(70,42,4,.72)" stroke-width=".3"/><polygon points="261.0,15.4 293.0,47.1 293.0,54.1 261.0,22.4" fill="rgba(132,84,6,.7)" stroke="rgba(70,42,4,.72)" stroke-width=".45"/><polygon points="261.0,12.0 293.0,43.7 293.0,47.1 261.0,15.4" fill="rgba(160,110,24,.64)" stroke="rgba(70,42,4,.72)" stroke-width=".3"/><polygon points="261.0,62.6 184.4,25.1 184.4,30.6 261.0,68.1" fill="rgba(132,84,6,.7)" stroke="rgba(70,42,4,.72)" stroke-width=".45"/><polygon points="261.0,60.6 184.4,23.1 184.4,25.1 261.0,62.6" fill="rgba(160,110,24,.64)" stroke="rgba(70,42,4,.72)" stroke-width=".3"/><polygon points="261.0,62.6 389.6,68.1 389.6,73.6 261.0,68.1" fill="rgba(132,84,6,.7)" stroke="rgba(70,42,4,.72)" stroke-width=".45"/><polygon points="261.0,60.6 389.6,66.1 389.6,68.1 261.0,62.6" fill="rgba(160,110,24,.64)" stroke="rgba(70,42,4,.72)" stroke-width=".3"/><polygon points="119.0,127.5 293.0,47.1 293.0,54.1 119.0,134.5" fill="rgba(132,84,6,.7)" stroke="rgba(70,42,4,.72)" stroke-width=".45"/><polygon points="119.0,124.1 293.0,43.7 293.0,47.1 119.0,127.5" fill="rgba(160,110,24,.64)" stroke="rgba(70,42,4,.72)" stroke-width=".3"/><polygon points="157.4,40.1 356.6,82.0 356.6,89.0 157.4,47.1" fill="rgba(132,84,6,.7)" stroke="rgba(70,42,4,.72)" stroke-width=".45"/><polygon points="157.4,36.7 356.6,78.6 356.6,82.0 157.4,40.1" fill="rgba(160,110,24,.64)" stroke="rgba(70,42,4,.72)" stroke-width=".3"/><polygon points="261.0,62.6 209.2,26.5 209.2,32.0 261.0,68.1" fill="rgba(132,84,6,.7)" stroke="rgba(70,42,4,.72)" stroke-width=".45"/><polygon points="261.0,60.6 209.2,24.5 209.2,26.5 261.0,62.6" fill="rgba(160,110,24,.64)" stroke="rgba(70,42,4,.72)" stroke-width=".3"/><polygon points="261.0,62.6 308.8,47.4 308.8,52.9 261.0,68.1" fill="rgba(132,84,6,.7)" stroke="rgba(70,42,4,.72)" stroke-width=".45"/><polygon points="261.0,60.6 308.8,45.4 308.8,47.4 261.0,62.6" fill="rgba(160,110,24,.64)" stroke="rgba(70,42,4,.72)" stroke-width=".3"/><polygon points="157.4,40.1 261.0,15.4 261.0,22.4 157.4,47.1" fill="rgba(132,84,6,.7)" stroke="rgba(70,42,4,.72)" stroke-width=".45"/><polygon points="157.4,36.7 261.0,12.0 261.0,15.4 157.4,40.1" fill="rgba(160,110,24,.64)" stroke="rgba(70,42,4,.72)" stroke-width=".3"/><polygon points="261.0,15.4 356.6,82.0 356.6,89.0 261.0,22.4" fill="rgba(132,84,6,.7)" stroke="rgba(70,42,4,.72)" stroke-width=".45"/><polygon points="261.0,12.0 356.6,78.6 356.6,82.0 261.0,15.4" fill="rgba(160,110,24,.64)" stroke="rgba(70,42,4,.72)" stroke-width=".3"/><rect x="256.6" y="18.9" width="4.4" height="46.5" fill="rgba(132,84,6,.7)" stroke="rgba(70,42,4,.72)" stroke-width=".45"/><rect x="261.0" y="18.9" width="4.4" height="46.5" fill="rgba(160,110,24,.64)" stroke="rgba(70,42,4,.72)" stroke-width=".45"/><polygon points="116.4,59.1 315.6,100.9 315.6,107.9 116.4,66.1" fill="rgba(132,84,6,.7)" stroke="rgba(70,42,4,.72)" stroke-width=".45"/><polygon points="116.4,55.7 315.6,97.5 315.6,100.9 116.4,59.1" fill="rgba(160,110,24,.64)" stroke="rgba(70,42,4,.72)" stroke-width=".3"/><polygon points="220.0,81.6 168.2,45.5 168.2,51.0 220.0,87.1" fill="rgba(132,84,6,.7)" stroke="rgba(70,42,4,.72)" stroke-width=".45"/><polygon points="220.0,79.6 168.2,43.5 168.2,45.5 220.0,81.6" fill="rgba(160,110,24,.64)" stroke="rgba(70,42,4,.72)" stroke-width=".3"/><polygon points="220.0,81.6 267.8,66.4 267.8,71.9 220.0,87.1" fill="rgba(132,84,6,.7)" stroke="rgba(70,42,4,.72)" stroke-width=".45"/><polygon points="220.0,79.6 267.8,64.4 267.8,66.4 220.0,81.6" fill="rgba(160,110,24,.64)" stroke="rgba(70,42,4,.72)" stroke-width=".3"/><polygon points="220.0,38.1 261.0,62.6 261.0,68.1 220.0,43.6" fill="rgba(132,84,6,.7)" stroke="rgba(70,42,4,.72)" stroke-width=".45"/><polygon points="220.0,36.1 261.0,60.6 261.0,62.6 220.0,38.1" fill="rgba(160,110,24,.64)" stroke="rgba(70,42,4,.72)" stroke-width=".3"/><polygon points="116.4,59.1 220.0,34.3 220.0,41.3 116.4,66.1" fill="rgba(132,84,6,.7)" stroke="rgba(70,42,4,.72)" stroke-width=".45"/><polygon points="116.4,55.7 220.0,30.9 220.0,34.3 116.4,59.1" fill="rgba(160,110,24,.64)" stroke="rgba(70,42,4,.72)" stroke-width=".3"/><polygon points="220.0,34.3 315.6,100.9 315.6,107.9 220.0,41.3" fill="rgba(132,84,6,.7)" stroke="rgba(70,42,4,.72)" stroke-width=".45"/><polygon points="220.0,30.9 315.6,97.5 315.6,100.9 220.0,34.3" fill="rgba(160,110,24,.64)" stroke="rgba(70,42,4,.72)" stroke-width=".3"/><rect x="215.6" y="37.8" width="4.4" height="46.5" fill="rgba(132,84,6,.7)" stroke="rgba(70,42,4,.72)" stroke-width=".45"/><rect x="220.0" y="37.8" width="4.4" height="46.5" fill="rgba(160,110,24,.64)" stroke="rgba(70,42,4,.72)" stroke-width=".45"/><polygon points="77.4,77.1 276.6,118.9 276.6,125.9 77.4,84.1" fill="rgba(132,84,6,.7)" stroke="rgba(70,42,4,.72)" stroke-width=".45"/><polygon points="77.4,73.7 276.6,115.5 276.6,118.9 77.4,77.1" fill="rgba(160,110,24,.64)" stroke="rgba(70,42,4,.72)" stroke-width=".3"/><polygon points="181.0,99.6 129.2,63.5 129.2,69.0 181.0,105.1" fill="rgba(132,84,6,.7)" stroke="rgba(70,42,4,.72)" stroke-width=".45"/><polygon points="181.0,97.6 129.2,61.5 129.2,63.5 181.0,99.6" fill="rgba(160,110,24,.64)" stroke="rgba(70,42,4,.72)" stroke-width=".3"/><polygon points="181.0,99.6 228.8,84.4 228.8,89.9 181.0,105.1" fill="rgba(132,84,6,.7)" stroke="rgba(70,42,4,.72)" stroke-width=".45"/><polygon points="181.0,97.6 228.8,82.4 228.8,84.4 181.0,99.6" fill="rgba(160,110,24,.64)" stroke="rgba(70,42,4,.72)" stroke-width=".3"/><polygon points="181.0,56.1 220.0,81.6 220.0,87.1 181.0,61.6" fill="rgba(132,84,6,.7)" stroke="rgba(70,42,4,.72)" stroke-width=".45"/><polygon points="181.0,54.1 220.0,79.6 220.0,81.6 181.0,56.1" fill="rgba(160,110,24,.64)" stroke="rgba(70,42,4,.72)" stroke-width=".3"/><polygon points="77.4,77.1 181.0,52.4 181.0,59.4 77.4,84.1" fill="rgba(132,84,6,.7)" stroke="rgba(70,42,4,.72)" stroke-width=".45"/><polygon points="77.4,73.7 181.0,49.0 181.0,52.4 77.4,77.1" fill="rgba(160,110,24,.64)" stroke="rgba(70,42,4,.72)" stroke-width=".3"/><polygon points="181.0,52.4 276.6,118.9 276.6,125.9 181.0,59.4" fill="rgba(132,84,6,.7)" stroke="rgba(70,42,4,.72)" stroke-width=".45"/><polygon points="181.0,49.0 276.6,115.5 276.6,118.9 181.0,52.4" fill="rgba(160,110,24,.64)" stroke="rgba(70,42,4,.72)" stroke-width=".3"/><rect x="176.6" y="55.9" width="4.4" height="46.5" fill="rgba(132,84,6,.7)" stroke="rgba(70,42,4,.72)" stroke-width=".45"/><rect x="181.0" y="55.9" width="4.4" height="46.5" fill="rgba(160,110,24,.64)" stroke="rgba(70,42,4,.72)" stroke-width=".45"/><polygon points="38.4,95.1 237.6,136.9 237.6,143.9 38.4,102.1" fill="rgba(132,84,6,.7)" stroke="rgba(70,42,4,.72)" stroke-width=".45"/><polygon points="38.4,91.7 237.6,133.5 237.6,136.9 38.4,95.1" fill="rgba(160,110,24,.64)" stroke="rgba(70,42,4,.72)" stroke-width=".3"/><polygon points="142.0,117.6 90.2,81.5 90.2,87.0 142.0,123.1" fill="rgba(132,84,6,.7)" stroke="rgba(70,42,4,.72)" stroke-width=".45"/><polygon points="142.0,115.6 90.2,79.5 90.2,81.5 142.0,117.6" fill="rgba(160,110,24,.64)" stroke="rgba(70,42,4,.72)" stroke-width=".3"/><polygon points="142.0,117.6 189.8,102.4 189.8,107.9 142.0,123.1" fill="rgba(132,84,6,.7)" stroke="rgba(70,42,4,.72)" stroke-width=".45"/><polygon points="142.0,115.6 189.8,100.4 189.8,102.4 142.0,117.6" fill="rgba(160,110,24,.64)" stroke="rgba(70,42,4,.72)" stroke-width=".3"/><polygon points="142.0,74.1 181.0,99.6 181.0,105.1 142.0,79.6" fill="rgba(132,84,6,.7)" stroke="rgba(70,42,4,.72)" stroke-width=".45"/><polygon points="142.0,72.1 181.0,97.6 181.0,99.6 142.0,74.1" fill="rgba(160,110,24,.64)" stroke="rgba(70,42,4,.72)" stroke-width=".3"/><polygon points="38.4,95.1 142.0,70.4 142.0,77.4 38.4,102.1" fill="rgba(132,84,6,.7)" stroke="rgba(70,42,4,.72)" stroke-width=".45"/><polygon points="38.4,91.7 142.0,67.0 142.0,70.4 38.4,95.1" fill="rgba(160,110,24,.64)" stroke="rgba(70,42,4,.72)" stroke-width=".3"/><polygon points="142.0,70.4 237.6,136.9 237.6,143.9 142.0,77.4" fill="rgba(132,84,6,.7)" stroke="rgba(70,42,4,.72)" stroke-width=".45"/><polygon points="142.0,67.0 237.6,133.5 237.6,136.9 142.0,70.4" fill="rgba(160,110,24,.64)" stroke="rgba(70,42,4,.72)" stroke-width=".3"/><rect x="137.6" y="73.9" width="4.4" height="46.5" fill="rgba(132,84,6,.7)" stroke="rgba(70,42,4,.72)" stroke-width=".45"/><rect x="142.0" y="73.9" width="4.4" height="46.5" fill="rgba(160,110,24,.64)" stroke="rgba(70,42,4,.72)" stroke-width=".45"/><polygon points="142.0,70.4 261.0,15.4 261.0,22.4 142.0,77.4" fill="rgba(132,84,6,.7)" stroke="rgba(70,42,4,.72)" stroke-width=".45"/><polygon points="142.0,67.0 261.0,12.0 261.0,15.4 142.0,70.4" fill="rgba(160,110,24,.64)" stroke="rgba(70,42,4,.72)" stroke-width=".3"/><polygon points="142.0,117.6 11.4,105.7 11.4,111.2 142.0,123.1" fill="rgba(132,84,6,.7)" stroke="rgba(70,42,4,.72)" stroke-width=".45"/><polygon points="142.0,115.6 11.4,103.7 11.4,105.7 142.0,117.6" fill="rgba(160,110,24,.64)" stroke="rgba(70,42,4,.72)" stroke-width=".3"/><polygon points="142.0,117.6 215.6,148.5 215.6,154.0 142.0,123.1" fill="rgba(132,84,6,.7)" stroke="rgba(70,42,4,.72)" stroke-width=".45"/><polygon points="142.0,115.6 215.6,146.5 215.6,148.5 142.0,117.6" fill="rgba(160,110,24,.64)" stroke="rgba(70,42,4,.72)" stroke-width=".3"/><polygon points="78.7,88.8 67.2,117.4 67.2,122.9 78.7,94.3" fill="rgba(132,84,6,.7)" stroke="rgba(70,42,4,.72)" stroke-width=".45"/><polygon points="78.7,86.8 67.2,115.4 67.2,117.4 78.7,88.8" fill="rgba(160,110,24,.64)" stroke="rgba(70,42,4,.72)" stroke-width=".3"/><polygon points="178.3,109.7 166.8,138.3 166.8,143.8 178.3,115.2" fill="rgba(132,84,6,.7)" stroke="rgba(70,42,4,.72)" stroke-width=".45"/><polygon points="178.3,107.7 166.8,136.3 166.8,138.3 178.3,109.7" fill="rgba(160,110,24,.64)" stroke="rgba(70,42,4,.72)" stroke-width=".3"/><polygon points="142.0,70.4 7.4,108.4 7.4,115.4 142.0,77.4" fill="rgba(132,84,6,.7)" stroke="rgba(70,42,4,.72)" stroke-width=".45"/><polygon points="142.0,67.0 7.4,105.0 7.4,108.4 142.0,70.4" fill="rgba(160,110,24,.64)" stroke="rgba(70,42,4,.72)" stroke-width=".3"/><polygon points="142.0,70.4 215.6,151.1 215.6,158.1 142.0,77.4" fill="rgba(132,84,6,.7)" stroke="rgba(70,42,4,.72)" stroke-width=".45"/><polygon points="142.0,67.0 215.6,147.7 215.6,151.1 142.0,70.4" fill="rgba(160,110,24,.64)" stroke="rgba(70,42,4,.72)" stroke-width=".3"/><polygon points="142.0,70.4 119.0,127.5 119.0,134.5 142.0,77.4" fill="rgba(132,84,6,.7)" stroke="rgba(70,42,4,.72)" stroke-width=".45"/><polygon points="142.0,67.0 119.0,124.1 119.0,127.5 142.0,70.4" fill="rgba(160,110,24,.64)" stroke="rgba(70,42,4,.72)" stroke-width=".3"/><polygon points="2.4,109.2 215.6,154.0 215.6,148.9 17.4,107.3" fill="rgba(50,100,244,.7)" stroke="rgba(20,50,190,.7)" stroke-width="0.3"/><polygon points="215.6,154.0 397.6,69.9 382.6,71.8 215.6,148.9" fill="rgba(50,100,244,.7)" stroke="rgba(20,50,190,.7)" stroke-width="0.3"/><polygon points="2.4,109.2 215.6,154.0 215.6,176.0 2.4,131.2" fill="rgba(30,85,242,.75)" stroke="rgba(20,50,190,.7)" stroke-width="0.3"/><polygon points="215.6,154.0 397.6,69.9 397.6,91.9 215.6,176.0" fill="rgba(30,85,242,.75)" stroke="rgba(20,50,190,.7)" stroke-width="0.3"/><polygon points="2.4,109.2 7.9,110.4 7.9,133.4 2.4,132.2" fill="rgba(15,50,215,.8)"/><polygon points="41.4,117.4 46.9,118.5 46.9,141.5 41.4,140.4" fill="rgba(15,50,215,.8)"/><polygon points="91.4,127.9 96.9,129.0 96.9,152.0 91.4,150.9" fill="rgba(15,50,215,.8)"/><polygon points="106.4,131.0 111.9,132.2 111.9,155.2 106.4,154.0" fill="rgba(15,50,215,.8)"/><polygon points="119.4,133.8 124.9,134.9 124.9,157.9 119.4,156.8" fill="rgba(15,50,215,.8)"/><polygon points="162.4,142.8 167.9,144.0 167.9,167.0 162.4,165.8" fill="rgba(15,50,215,.8)"/><polygon points="177.4,145.9 182.9,147.1 182.9,170.1 177.4,168.9" fill="rgba(15,50,215,.8)"/><polygon points="192.4,149.1 197.9,150.3 197.9,173.3 192.4,172.1" fill="rgba(15,50,215,.8)"/><polygon points="217.6,153.0 225.6,149.4 225.6,172.4 217.6,176.0" fill="rgba(15,50,215,.8)"/><polygon points="240.6,142.4 248.6,138.7 248.6,161.7 240.6,165.4" fill="rgba(15,50,215,.8)"/><polygon points="251.6,137.3 259.6,133.6 259.6,156.6 251.6,160.3" fill="rgba(15,50,215,.8)"/><polygon points="272.6,127.6 280.6,123.9 280.6,146.9 272.6,150.6" fill="rgba(15,50,215,.8)"/><polygon points="283.6,122.6 291.6,118.9 291.6,141.9 283.6,145.6" fill="rgba(15,50,215,.8)"/><polygon points="301.6,114.2 309.6,110.5 309.6,133.5 301.6,137.2" fill="rgba(15,50,215,.8)"/><polygon points="320.6,105.5 328.6,101.8 328.6,124.8 320.6,128.5" fill="rgba(15,50,215,.8)"/><polygon points="329.6,101.3 337.6,97.6 337.6,120.6 329.6,124.3" fill="rgba(15,50,215,.8)"/><polygon points="349.6,92.1 357.6,88.4 357.6,111.4 349.6,115.1" fill="rgba(15,50,215,.8)"/><polygon points="359.6,87.4 367.6,83.7 367.6,106.7 359.6,110.4" fill="rgba(15,50,215,.8)"/><polygon points="373.6,81.0 381.6,77.3 381.6,100.3 373.6,104.0" fill="rgba(15,50,215,.8)"/><polygon points="390.6,73.1 398.6,69.4 398.6,92.4 390.6,96.1" fill="rgba(15,50,215,.8)"/><g stroke-width="1.1" fill="none"><path d="M589.4 20.5V3" stroke="#2a3fd0"/><path d="M589.4 20.5L575.5 17.6" stroke="#2f9a3a"/><path d="M589.4 20.5L599 16.6" stroke="#d83a3a"/></g><circle cx="589.4" cy="3.6" r="1.1" fill="#2a3fd0"/><circle cx="599" cy="16.4" r="1.3" fill="#d83a3a"/><circle cx="575.6" cy="17.4" r="1.1" fill="#2f9a3a"/></svg>
<svg class="b" style="left:793.5px;top:70.5px" width="5" height="10" viewBox="0 0 5 10"><path d="M.5 3.2L2.5 .8L4.5 3.2M.5 6.6L2.5 9L4.5 6.6" fill="none" stroke="#9a9a9a" stroke-width=".8"/></svg>
<div class="b" style="left:800px;top:67.5px;width:2.5px;height:500px;background:#f4f4f4;"></div>
<div class="b" style="left:802.5px;top:67.5px;width:221.5px;height:520px;background:#e6e6e6;"></div>
<div class="t" style="top:74.37px;font-size:11.25px;line-height:14.06px;color:#505050;left:807.5px;">Επιλεγμένα Στοιχεία</div>
<svg class="b" style="left:1018.6px;top:77.4px" width="4" height="2.6" viewBox="0 0 5 3"><path d="M0 0h5L2.5 3z" fill="#555"/></svg>
<div class="b" style="left:802.5px;top:89px;width:221.5px;height:17.5px;background:#ececec;"></div>
<svg class="b" style="left:811.5px;top:94px" width="10" height="9" viewBox="0 0 10 9"><path d="M.6 .4L3 5.6L3.4 3.4L5.4 2.8Z" fill="#222"/><rect x="4.2" y="3.4" width="5" height="5" fill="none" stroke="#333" stroke-width=".7"/><path d="M6.7 3.4v5M4.2 5.9h5" stroke="#333" stroke-width=".5"/></svg>
<div class="b" style="left:827.3px;top:93.5px;width:61.5px;height:10.5px;background:#fff;border:.6px solid #d4d4d4;"></div>
<div class="t" style="top:94.92px;font-size:6.2px;line-height:7.75px;color:#444;left:830px;">1 Επικαλύψεις</div>
<svg class="b" style="left:883px;top:97.6px" width="4" height="3" viewBox="0 0 4 3"><path d="M.3 .3L2 2.2L3.7 .3" fill="none" stroke="#888" stroke-width=".6"/></svg>
<div class="b" style="left:895.8px;top:94px;width:10.5px;height:8.5px;background:#c9c9c9;"></div>
<div class="t" style="top:95.03px;font-size:5.4px;line-height:6.75px;color:#333;left:901px;transform:translateX(-50%);font-weight:bold;">ms</div>
<svg class="b" style="left:912.5px;top:94px" width="9" height="9" viewBox="0 0 9 9"><circle cx="4.5" cy="4.5" r="3.8" fill="#cfe0f5" stroke="#4a6fa8" stroke-width=".7"/><path d="M.7 4.5h7.6M4.5 .7v7.6M2 2.2Q4.5 3.4 7 2.2M2 6.8Q4.5 5.6 7 6.8" fill="none" stroke="#4a6fa8" stroke-width=".5"/></svg>
<svg class="b" style="left:924px;top:93.5px" width="10" height="10" viewBox="0 0 10 10"><rect x=".5" y=".8" width="6.4" height="5" fill="#fff" stroke="#6a7fa8" stroke-width=".7"/><circle cx="6.4" cy="6" r="1.8" fill="#f2d9d6" stroke="#a05048" stroke-width=".6"/><path d="M7.6 7.4L9.4 9.4" stroke="#a05048" stroke-width=".9"/></svg>
<svg class="b" style="left:940px;top:93.6px" width="10" height="10" viewBox="0 0 10 10"><path d="M.6 3L3 .8h6.2v5.8L6.8 9H.6zM.6 3h6.2V9M6.8 3L9.2 .8" fill="#e8f0fa" stroke="#2c4f8c" stroke-width=".7"/><path d="M3 .8v5.8H9.2M3 6.6L.6 9" fill="none" stroke="#5a7fb8" stroke-width=".5"/></svg>
<svg class="b" style="left:952px;top:93.6px" width="10" height="10" viewBox="0 0 10 10"><path d="M.6 3L3 .8h6.2v5.8L6.8 9H.6zM.6 3h6.2V9M6.8 3L9.2 .8" fill="#e8f0fa" stroke="#2c4f8c" stroke-width=".7"/><path d="M3 .8v5.8H9.2M3 6.6L.6 9" fill="none" stroke="#5a7fb8" stroke-width=".5"/></svg>
<svg class="b" style="left:963.5px;top:93.6px" width="10" height="10" viewBox="0 0 10 10"><path d="M.6 3L3 .8h6.2v5.8L6.8 9H.6zM.6 3h6.2V9M6.8 3L9.2 .8" fill="#e8f0fa" stroke="#2c4f8c" stroke-width=".7"/><path d="M3 .8v5.8H9.2M3 6.6L.6 9" fill="none" stroke="#5a7fb8" stroke-width=".5"/></svg>
<div class="b" style="left:973.5px;top:92.8px;width:12.5px;height:11.4px;background:#cfe3f7;border:.5px solid #9cc3ea;"></div>
<svg class="b" style="left:975px;top:93.6px" width="10" height="10" viewBox="0 0 10 10"><path d="M.6 3L3 .8h6.2v5.8L6.8 9H.6z" fill="#2f8ae0"/><path d="M.6 3h6.2V9H.6z" fill="#57a7f0"/><path d="M.6 3L3 .8h6.2L6.8 3z" fill="#8cc6fa"/></svg>
<svg class="b" style="left:992px;top:94.5px" width="9" height="8" viewBox="0 0 9 8"><rect x=".5" y=".5" width="4.6" height="4.2" fill="#dbe7f6" stroke="#7f9cc8" stroke-width=".6"/><rect x="3" y="2.8" width="5" height="4.4" fill="#a9c4e8" stroke="#5f82b8" stroke-width=".6"/></svg>
<div class="b" style="left:815.5px;top:107.3px;width:198.5px;height:146.6px;background:#fff;"></div>
<svg class="b" style="left:815.5px;top:107.3px" width="198.5" height="146.6" viewBox="0 0 198.5 146.6"><rect x="14.5" y="15.3" width="71.5" height="72.7" fill="#ea8218"/><rect x="14.5" y="9.4" width="5" height="84.5" fill="#ea8218"/><rect x="81.5" y="9.4" width="5" height="84.5" fill="#ea8218"/><rect x="8.5" y="17.7" width="83.3" height="3.4" fill="#f09a38"/><path d="M14.5 17.7H86M14.5 21.099999999999998H86" stroke="#5a3208" stroke-width=".3" opacity=".7"/><rect x="8.5" y="49.9" width="83.3" height="3.4" fill="#f09a38"/><path d="M14.5 49.9H86M14.5 53.3H86" stroke="#5a3208" stroke-width=".3" opacity=".7"/><rect x="8.5" y="82.1" width="83.3" height="3.4" fill="#f09a38"/><path d="M14.5 82.1H86M14.5 85.5H86" stroke="#5a3208" stroke-width=".3" opacity=".7"/><path d="M16.6 15.3V88" stroke="#5a3208" stroke-width=".45"/><path d="M27.9 15.3V88" stroke="#5a3208" stroke-width=".45"/><path d="M39.1 15.3V88" stroke="#5a3208" stroke-width=".45"/><path d="M50.3 15.3V88" stroke="#5a3208" stroke-width=".45"/><path d="M61.7 15.3V88" stroke="#5a3208" stroke-width=".45"/><path d="M73.1 15.3V88" stroke="#5a3208" stroke-width=".45"/><path d="M83.9 15.3V88" stroke="#5a3208" stroke-width=".45"/><text x="43.6" y="11" font-size="6.6" fill="#222">B</text><path d="M50 8.6L53.8 6.4V10.8Z" fill="#111"/><path d="M54.5 7.7V20" stroke="#222" stroke-width=".4"/><text x="43.6" y="97.8" font-size="6.6" fill="#222">B</text><path d="M50 95.4L53.8 93.2V97.6Z" fill="#111"/><path d="M54.5 96.4V86" stroke="#222" stroke-width=".4"/><text x="4.7" y="35.4" font-size="6.6" fill="#222">A</text><path d="M5.2 39.8L7.4 36L9.6 39.8Z" fill="#111"/><path d="M4.9 40.8H19.1" stroke="#222" stroke-width=".4"/><text x="90.8" y="35.4" font-size="6.6" fill="#222">A</text><path d="M91.2 39.8L93.4 36L95.6 39.8Z" fill="#111"/><path d="M80.9 40.8H96.3" stroke="#222" stroke-width=".4"/><text x="32.4" y="66.6" font-size="4" fill="#222">s</text><path d="M27.9 68.3H39.6M27.9 67v2.6M39.6 67v2.6" stroke="#222" stroke-width=".35"/><g transform="translate(115.4,26.8) rotate(24.5)"><rect x="-2" y="7" width="88" height="6.6" fill="#ea8218"/><rect x="6.0" y="4.5" width="3" height="2.6" fill="#f09a38"/><rect x="27.5" y="4.5" width="3" height="2.6" fill="#f09a38"/><rect x="49.0" y="4.5" width="3" height="2.6" fill="#f09a38"/><rect x="70.5" y="4.5" width="3" height="2.6" fill="#f09a38"/><rect x="0.0" y="0" width="10" height="4.4" rx=".7" fill="#a8381a"/><rect x="9.5" y="0" width="10" height="4.4" rx=".7" fill="#a8381a"/><rect x="19.0" y="0" width="10" height="4.4" rx=".7" fill="#a8381a"/><rect x="28.5" y="0" width="10" height="4.4" rx=".7" fill="#a8381a"/><rect x="38.0" y="0" width="10" height="4.4" rx=".7" fill="#a8381a"/><rect x="47.5" y="0" width="10" height="4.4" rx=".7" fill="#a8381a"/><rect x="57.0" y="0" width="10" height="4.4" rx=".7" fill="#a8381a"/><rect x="66.5" y="0" width="10" height="4.4" rx=".7" fill="#a8381a"/><rect x="76.0" y="0" width="10" height="4.4" rx=".7" fill="#a8381a"/><rect x="7.6" y="-.9" width="2.4" height="1.6" rx=".4" fill="#a8381a"/><rect x="17.1" y="-.9" width="2.4" height="1.6" rx=".4" fill="#a8381a"/><rect x="26.6" y="-.9" width="2.4" height="1.6" rx=".4" fill="#a8381a"/><rect x="36.1" y="-.9" width="2.4" height="1.6" rx=".4" fill="#a8381a"/><rect x="45.6" y="-.9" width="2.4" height="1.6" rx=".4" fill="#a8381a"/><rect x="55.1" y="-.9" width="2.4" height="1.6" rx=".4" fill="#a8381a"/><rect x="64.6" y="-.9" width="2.4" height="1.6" rx=".4" fill="#a8381a"/><rect x="74.1" y="-.9" width="2.4" height="1.6" rx=".4" fill="#a8381a"/><rect x="83.6" y="-.9" width="2.4" height="1.6" rx=".4" fill="#a8381a"/><text x="28" y="-3.4" font-size="3.6" fill="#333">g (kN/m²)</text><path d="M26 -2.4H46V1" stroke="#444" stroke-width=".3" fill="none"/><path d="M11 27.2H44M11 25.7v3M44 25.7v3" stroke="#333" stroke-width=".35"/><text x="26" y="26" font-size="3.8" fill="#222">s</text><text x="-2" y="18" font-size="3.4" fill="#333">b₀</text><path d="M2 14v4h3v-4" stroke="#555" stroke-width=".3" fill="none"/></g><path d="M114.6 26L109.4 36.6M112.6 24.4L107.6 35" stroke="#444" stroke-width=".3"/><text x="106" y="37" font-size="3.6" fill="#222" transform="rotate(-65.5 106 37)">h₂ h₁ h</text><text x="174.6" y="47.4" font-size="6.6" fill="#222">A</text><path d="M168.4 41.2L172.8 42.6L169.6 45.8Z" fill="#111"/><path d="M170.4 43.6L160.6 66" stroke="#222" stroke-width=".4"/><text x="163.2" y="73.8" font-size="6.6" fill="#222">A</text><path d="M157.6 71.6L159.8 67.6L162 71.6Z" fill="#111"/><text x="137.6" y="87.4" font-size="5.6" fill="#222">B-B</text><path d="M137 88.6H149" stroke="#222" stroke-width=".4"/><rect x="8.5" y="112.3" width="83" height="4.7" fill="#ea8218"/><rect x="14.7" y="117" width="4.7" height="7" fill="#ea8218"/><rect x="81.5" y="117" width="4.7" height="7" fill="#ea8218"/><path d="M9.9 112.6A4.1 4.3 0 0 1 18.1 112.6" fill="none" stroke="#8f2f12" stroke-width="1.3"/><path d="M19.0 112.6A4.1 4.3 0 0 1 27.2 112.6" fill="none" stroke="#8f2f12" stroke-width="1.3"/><path d="M28.1 112.6A4.1 4.3 0 0 1 36.3 112.6" fill="none" stroke="#8f2f12" stroke-width="1.3"/><path d="M37.3 112.6A4.1 4.3 0 0 1 45.5 112.6" fill="none" stroke="#8f2f12" stroke-width="1.3"/><path d="M46.4 112.6A4.1 4.3 0 0 1 54.6 112.6" fill="none" stroke="#8f2f12" stroke-width="1.3"/><path d="M55.5 112.6A4.1 4.3 0 0 1 63.7 112.6" fill="none" stroke="#8f2f12" stroke-width="1.3"/><path d="M64.6 112.6A4.1 4.3 0 0 1 72.8 112.6" fill="none" stroke="#8f2f12" stroke-width="1.3"/><path d="M73.7 112.6A4.1 4.3 0 0 1 81.9 112.6" fill="none" stroke="#8f2f12" stroke-width="1.3"/><path d="M82.9 112.6A4.1 4.3 0 0 1 91.1 112.6" fill="none" stroke="#8f2f12" stroke-width="1.3"/><text x="69" y="103.4" font-size="3.6" fill="#333">g (kN/m²)</text><path d="M66.4 108.6L67 104.4H83.8" stroke="#444" stroke-width=".3" fill="none"/><path d="M92 112.3H103M92 117H103M88 124H103M99.5 108.5V126M102 112.3V124" stroke="#555" stroke-width=".3"/><text x="97.6" y="111.4" font-size="3.4" fill="#222">h₂</text><text x="103.4" y="116" font-size="3.4" fill="#222">h</text><text x="97.4" y="122" font-size="3.4" fill="#222">h₁</text><text x="89" y="129.6" font-size="3.8" fill="#222">b₀</text><path d="M17 135.5H83.8M17 125v11.6M83.8 125v11.6" stroke="#444" stroke-width=".35"/><text x="48" y="134.2" font-size="5" fill="#222">L</text><text x="48" y="143.8" font-size="5.6" fill="#222">A-A</text><path d="M47.6 145H59.6" stroke="#222" stroke-width=".4"/></svg>
<div class="b" style="left:806px;top:255px;width:209.5px;height:271px;background:#fff;"></div>
<div class="b" style="left:1015.5px;top:255px;width:8.5px;height:271px;background:#fbfbfb;"></div>
<div class="b" style="left:806px;top:255.29999999999998px;width:209.5px;height:9.2px;background:#eaeaea;"></div>
<svg class="b" style="left:807.5px;top:258.4px" width="3.4" height="3.4" viewBox="0 0 4 4"><path d="M3.6 .4V3.6H.4Z" fill="#777"/></svg>
<div class="t" style="top:256.04px;font-size:6.5px;line-height:8.12px;color:#333;left:816.3px;font-weight:bold;letter-spacing:-.15px;">Στρώσεις Επικάλυψης</div>
<div class="b" style="left:806px;top:264.38999999999993px;width:209.5px;height:9.2px;background:#eaeaea;"></div>
<svg class="b" style="left:817.5px;top:267.48999999999995px" width="3.4" height="3.4" viewBox="0 0 4 4"><path d="M3.6 .4V3.6H.4Z" fill="#777"/></svg>
<div class="t" style="top:265.13px;font-size:6.5px;line-height:8.12px;color:#333;left:825.3px;font-weight:bold;letter-spacing:-.15px;">Στρώση 1</div>
<div class="t" style="top:274.34px;font-size:6.3px;line-height:7.88px;color:#555;left:825px;">Είδος Στρώσης</div>
<div class="t" style="top:274.34px;font-size:6.3px;line-height:7.88px;color:#555;left:917.6px;">Δοκίδες</div>
<div class="t" style="top:283.43px;font-size:6.3px;line-height:7.88px;color:#555;left:825px;">Όνομα Στρώσης</div>
<div class="t" style="top:292.52px;font-size:6.3px;line-height:7.88px;color:#555;left:825px;">Υλικό</div>
<div class="t" style="top:292.52px;font-size:6.3px;line-height:7.88px;color:#555;left:917.6px;">C24</div>
<div class="t" style="top:301.61px;font-size:6.3px;line-height:7.88px;color:#555;left:825px;">b=</div>
<div class="t" style="top:301.61px;font-size:6.3px;line-height:7.88px;color:#555;left:917.6px;">8.0 cm</div>
<div class="t" style="top:310.7px;font-size:6.3px;line-height:7.88px;color:#555;left:825px;">h=</div>
<div class="t" style="top:310.7px;font-size:6.3px;line-height:7.88px;color:#555;left:917.6px;">10.0 cm</div>
<div class="t" style="top:319.79px;font-size:6.3px;line-height:7.88px;color:#555;left:825px;">s=</div>
<div class="t" style="top:319.79px;font-size:6.3px;line-height:7.88px;color:#555;left:917.6px;">50.0 cm</div>
<div class="t" style="top:328.88px;font-size:6.3px;line-height:7.88px;color:#555;left:825px;">L=</div>
<div class="t" style="top:328.88px;font-size:6.3px;line-height:7.88px;color:#555;left:917.6px;">100.0 cm</div>
<div class="t" style="top:337.97px;font-size:6.3px;line-height:7.88px;color:#b4b4b4;left:825px;">g=</div>
<div class="t" style="top:337.97px;font-size:6.3px;line-height:7.88px;color:#b4b4b4;left:917.6px;">0.07 kN/m²</div>
<div class="b" style="left:806px;top:346.19999999999993px;width:209.5px;height:9.2px;background:#eaeaea;"></div>
<svg class="b" style="left:817.5px;top:349.29999999999995px" width="3.4" height="3.4" viewBox="0 0 4 4"><path d="M3.6 .4V3.6H.4Z" fill="#777"/></svg>
<div class="t" style="top:346.94px;font-size:6.5px;line-height:8.12px;color:#333;left:825.3px;font-weight:bold;letter-spacing:-.15px;">Στρώση 2</div>
<div class="t" style="top:356.15px;font-size:6.3px;line-height:7.88px;color:#555;left:825px;">Είδος Στρώσης</div>
<div class="t" style="top:356.15px;font-size:6.3px;line-height:7.88px;color:#555;left:917.6px;">Σανίδες</div>
<div class="t" style="top:365.24px;font-size:6.3px;line-height:7.88px;color:#555;left:825px;">Όνομα Στρώσης</div>
<div class="t" style="top:374.33px;font-size:6.3px;line-height:7.88px;color:#555;left:825px;">Υλικό</div>
<div class="t" style="top:374.33px;font-size:6.3px;line-height:7.88px;color:#555;left:917.6px;">C24</div>
<div class="t" style="top:383.42px;font-size:6.3px;line-height:7.88px;color:#555;left:825px;">b=</div>
<div class="t" style="top:383.42px;font-size:6.3px;line-height:7.88px;color:#555;left:917.6px;">10.0 cm</div>
<div class="t" style="top:392.51px;font-size:6.3px;line-height:7.88px;color:#555;left:825px;">h=</div>
<div class="t" style="top:392.51px;font-size:6.3px;line-height:7.88px;color:#555;left:917.6px;">2.5 cm</div>
<div class="t" style="top:401.6px;font-size:6.3px;line-height:7.88px;color:#b4b4b4;left:825px;">g=</div>
<div class="t" style="top:401.6px;font-size:6.3px;line-height:7.88px;color:#b4b4b4;left:917.6px;">0.11 kN/m²</div>
<div class="b" style="left:806px;top:409.8299999999999px;width:209.5px;height:9.2px;background:#eaeaea;"></div>
<svg class="b" style="left:817.5px;top:412.92999999999995px" width="3.4" height="3.4" viewBox="0 0 4 4"><path d="M3.6 .4V3.6H.4Z" fill="#777"/></svg>
<div class="t" style="top:410.57px;font-size:6.5px;line-height:8.12px;color:#333;left:825.3px;font-weight:bold;letter-spacing:-.15px;">Στρώση 3</div>
<div class="t" style="top:419.78px;font-size:6.3px;line-height:7.88px;color:#555;left:825px;">Είδος Στρώσης</div>
<div class="t" style="top:419.78px;font-size:6.3px;line-height:7.88px;color:#555;left:917.6px;">Προσθ. Φορτία</div>
<div class="t" style="top:428.87px;font-size:6.3px;line-height:7.88px;color:#555;left:825px;">Όνομα Στρώσης</div>
<div class="t" style="top:428.87px;font-size:6.3px;line-height:7.88px;color:#555;left:917.6px;">Κεραμίδια κολυμβητά</div>
<div class="t" style="top:437.96px;font-size:6.3px;line-height:7.88px;color:#555;left:825px;">g=</div>
<div class="t" style="top:437.96px;font-size:6.3px;line-height:7.88px;color:#555;left:917.6px;">0.60 kN/m²</div>
<div class="t" style="top:447.05px;font-size:6.3px;line-height:7.88px;color:#555;left:816.4px;">Νέα Στρώση</div>
<div class="t" style="top:447.05px;font-size:6.3px;line-height:7.88px;color:#555;left:917.6px;">Νέα Στρώση</div>
<div class="t" style="top:456.14px;font-size:6.3px;line-height:7.88px;color:#b4b4b4;left:816.4px;">Συνολικό Φορτίο Επικάλυψης (gε...</div>
<div class="t" style="top:456.14px;font-size:6.3px;line-height:7.88px;color:#b4b4b4;left:917.6px;">0.77 kN/m²</div>
<div class="b" style="left:806px;top:464.36999999999995px;width:209.5px;height:9.2px;background:#eaeaea;"></div>
<svg class="b" style="left:807.5px;top:467.46999999999997px" width="3.4" height="3.4" viewBox="0 0 4 4"><path d="M3.6 .4V3.6H.4Z" fill="#777"/></svg>
<div class="t" style="top:465.11px;font-size:6.5px;line-height:8.12px;color:#333;left:816.3px;font-weight:bold;letter-spacing:-.15px;">Επικαλύψεις</div>
<div class="t" style="top:474.32px;font-size:6.3px;line-height:7.88px;color:#b4b4b4;left:816.4px;">Επ. Φόρτ.</div>
<div class="t" style="top:474.32px;font-size:6.3px;line-height:7.88px;color:#b4b4b4;left:917.6px;">LA_1</div>
<div class="t" style="top:483.41px;font-size:6.3px;line-height:7.88px;color:#555;left:816.4px;">Κατηγορία Λειτουργίας</div>
<div class="t" style="top:483.41px;font-size:6.3px;line-height:7.88px;color:#555;left:917.6px;">Κατηγορία Λειτουργίας 1</div>
<div class="t" style="top:492.5px;font-size:6.3px;line-height:7.88px;color:#555;left:816.4px;">Έλεγχος Επάρκειας Επικάλυψης</div>
<div class="t" style="top:492.5px;font-size:6.3px;line-height:7.88px;color:#555;left:917.6px;">ΝΑΙ</div>
<svg class="b" style="left:816.6px;top:502.13px" width="6.6" height="6.6" viewBox="0 0 7 7"><rect x=".4" y=".4" width="6" height="6" fill="#fff" stroke="#777" stroke-width=".6"/><path d="M1.6 3.5L2.9 4.8L5.3 1.9" fill="none" stroke="#444" stroke-width=".8"/></svg>
<div class="t" style="top:501.59px;font-size:6.3px;line-height:7.88px;color:#555;left:826px;">Έλεγχος για κινητό φορτίο συ...</div>
<div class="t" style="top:510.68px;font-size:6.3px;line-height:7.88px;color:#555;left:816.4px;">Επιβαλλόμενο Φορτίο</div>
<div class="t" style="top:510.68px;font-size:6.3px;line-height:7.88px;color:#555;left:917.6px;">1.00 kN</div>
<div class="t" style="top:519.77px;font-size:6.3px;line-height:7.88px;color:#555;left:816.4px;">Επικάλυψη</div>
<div class="t" style="top:519.77px;font-size:6.3px;line-height:7.88px;color:#555;left:917.6px;">Κεραμίδια κολυμβητά-3</div>
<div class="b" style="left:802.5px;top:524.8px;width:221.5px;height:63px;background:#ebebeb;"></div>
<div class="b" style="left:802.5px;top:564.6px;width:221.5px;height:2px;background:#cbcbcb;"></div>
<div class="b" style="left:802.5px;top:566.6px;width:221.5px;height:19px;background:#f1f1f1;"></div>
<div class="b" style="left:905px;top:565px;width:34px;height:1.4px;background-image:repeating-linear-gradient(90deg,#9a9a9a 0 1px,transparent 1px 2.2px);"></div>
<div class="b" style="left:0px;top:423px;width:800px;height:2px;background:#ececec;"></div>
<div class="b" style="left:0px;top:425px;width:800px;height:147px;background:#e6e6e6;"></div>
<div class="t" style="top:430.74px;font-size:11.3px;line-height:14.12px;color:#2e74c4;left:2px;">Παράθυρο Εργασίας 1</div>
<svg class="b" style="left:772.4px;top:435.6px" width="5" height="3" viewBox="0 0 5 3"><path d="M0 0h5L2.5 3z" fill="#666"/></svg>
<svg class="b" style="left:783px;top:434px" width="5" height="6" viewBox="0 0 5 6"><path d="M1.2 .4h2.6v3H1.2zM.3 3.4h4.4M2.5 3.4v2.4" fill="none" stroke="#666" stroke-width=".7"/></svg>
<svg class="b" style="left:793px;top:434.8px" width="5" height="5" viewBox="0 0 5 5"><path d="M.5 .5L4.5 4.5M4.5 .5L.5 4.5" stroke="#666" stroke-width=".8"/></svg>
<div class="b" style="left:0px;top:447.5px;width:800px;height:14px;background:#efefef;"></div>
<svg class="b" style="left:7px;top:450px" width="7" height="8" viewBox="0 0 7 8"><path d="M.5 .5h4l2 2v5h-6z" fill="#fff" stroke="#555" stroke-width=".7"/><path d="M4.5 .5v2h2M1.6 4h3.6M1.6 5.6h3.6" fill="none" stroke="#555" stroke-width=".5"/></svg>
<div class="t" style="top:450.07px;font-size:6.6px;line-height:8.25px;color:#555;left:16px;">Κείμενα Αποτελεσμάτων</div>
<div class="b" style="left:91.3px;top:449.5px;width:0.7px;height:10px;background:#e0e0e0;"></div>
<svg class="b" style="left:96.5px;top:450.5px" width="7" height="7" viewBox="0 0 7 7"><path d="M1 2h5M6 2L4.6 .6M6 2L4.6 3.4M6 5H1M1 5L2.4 3.6M1 5l1.4 1.4" fill="none" stroke="#2a3fb0" stroke-width="1"/></svg>
<div class="t" style="top:450.26px;font-size:6.3px;line-height:7.88px;color:#555;left:106px;">Συγχρονισμός</div>
<div class="b" style="left:150.6px;top:449.5px;width:0.7px;height:10px;background:#e0e0e0;"></div>
<svg class="b" style="left:155px;top:450.4px" width="7.4" height="7.4" viewBox="0 0 8 8"><circle cx="4" cy="4" r="3.6" fill="#2c5fd8"/><circle cx="3.2" cy="3" r="1.4" fill="#5f8cf0" opacity=".7"/></svg>
<div class="b" style="left:165px;top:448.6px;width:103.5px;height:11.6px;background:#d2d2d2;"></div>
<svg class="b" style="left:166.6px;top:450.4px" width="7.4" height="7.4" viewBox="0 0 8 8"><circle cx="4" cy="4" r="3.6" fill="#38b060"/><path d="M.5 4h7M4 .5v7" stroke="#bfe8c8" stroke-width=".6"/></svg>
<div class="t" style="top:450.01px;font-size:6.7px;line-height:8.38px;color:#555;left:176px;">Εμφάνιση Γραφημάτων Πάντα</div>
<div class="t" style="top:450.26px;font-size:6.3px;line-height:7.88px;color:#666;left:275px;">Επιλεγμένα</div>
<div class="b" style="left:311px;top:448.6px;width:16px;height:11.6px;background:#d2d2d2;"></div>
<div class="t" style="top:450.26px;font-size:6.3px;line-height:7.88px;color:#555;left:312.5px;">Εικον</div>
<div class="b" style="left:0px;top:461.3px;width:800.4px;height:110.4px;background:#ececec;border:.8px solid #a4a4a4;border-left:none;"></div>
<div class="b" style="left:0px;top:461.3px;width:326.4px;height:77.7px;background:#f2f2f2;"></div>
<div class="b" style="left:15.5px;top:501.4px;width:310.9px;height:37.6px;background:#fff;"></div>
<div class="b" style="left:15.5px;top:510.8px;width:310.9px;height:9.4px;background:#fbdc93;"></div>
<div class="b" style="left:0px;top:460.90000000000003px;width:326.4px;height:0.8px;background:#4a4a4a;"></div>
<div class="b" style="left:0px;top:474.3px;width:326.4px;height:0.8px;background:#4a4a4a;"></div>
<div class="b" style="left:167.7px;top:487.8px;width:158.7px;height:0.8px;background:#4a4a4a;"></div>
<div class="b" style="left:0px;top:501.0px;width:326.4px;height:0.8px;background:#4a4a4a;"></div>
<div class="b" style="left:0px;top:510.40000000000003px;width:326.4px;height:0.8px;background:#4a4a4a;"></div>
<div class="b" style="left:0px;top:519.8000000000001px;width:326.4px;height:0.8px;background:#4a4a4a;"></div>
<div class="b" style="left:0px;top:529.2px;width:326.4px;height:0.8px;background:#4a4a4a;"></div>
<div class="b" style="left:0px;top:538.6px;width:326.4px;height:0.8px;background:#4a4a4a;"></div>
<div class="b" style="left:15.1px;top:474.7px;width:0.8px;height:64.30000000000001px;background:#4a4a4a;"></div>
<div class="b" style="left:64.3px;top:474.7px;width:0.8px;height:64.30000000000001px;background:#4a4a4a;"></div>
<div class="b" style="left:141.0px;top:474.7px;width:0.8px;height:64.30000000000001px;background:#4a4a4a;"></div>
<div class="b" style="left:167.29999999999998px;top:474.7px;width:0.8px;height:64.30000000000001px;background:#4a4a4a;"></div>
<div class="b" style="left:203.0px;top:474.7px;width:0.8px;height:64.30000000000001px;background:#4a4a4a;"></div>
<div class="b" style="left:242.79999999999998px;top:474.7px;width:0.8px;height:64.30000000000001px;background:#4a4a4a;"></div>
<div class="b" style="left:269.90000000000003px;top:474.7px;width:0.8px;height:64.30000000000001px;background:#4a4a4a;"></div>
<div class="b" style="left:326.0px;top:461.3px;width:0.8px;height:77.69999999999999px;background:#4a4a4a;"></div>
<div class="t" style="top:464.26px;font-size:6.3px;line-height:7.88px;color:#333;left:163px;transform:translateX(-50%);">Έλεγχος Επάρκειας Επικαλύψεων</div>
<div class="t" style="top:484.26px;font-size:6.3px;line-height:7.88px;color:#333;left:7.8px;transform:translateX(-50%);">α/α</div>
<div class="t" style="top:484.26px;font-size:6.3px;line-height:7.88px;color:#333;left:40px;transform:translateX(-50%);">Επ. Φόρτισης</div>
<div class="t" style="top:484.26px;font-size:6.3px;line-height:7.88px;color:#333;left:103px;transform:translateX(-50%);">Επικάλυψη</div>
<div class="t" style="top:484.26px;font-size:6.3px;line-height:7.88px;color:#333;left:154.6px;transform:translateX(-50%);">Πλευρά</div>
<div class="t" style="top:477.66px;font-size:6.3px;line-height:7.88px;color:#333;left:185.5px;transform:translateX(-50%);">Κάμψη</div>
<div class="t" style="top:491.06px;font-size:6.3px;line-height:7.88px;color:#333;left:185.5px;transform:translateX(-50%);">CR_bn</div>
<div class="t" style="top:477.66px;font-size:6.3px;line-height:7.88px;color:#333;left:223.3px;transform:translateX(-50%);">Διάτμηση</div>
<div class="t" style="top:491.06px;font-size:6.3px;line-height:7.88px;color:#333;left:223.3px;transform:translateX(-50%);">CR_sh</div>
<div class="t" style="top:477.66px;font-size:6.3px;line-height:7.88px;color:#333;left:256.8px;transform:translateX(-50%);">Αξονική</div>
<div class="t" style="top:491.06px;font-size:6.3px;line-height:7.88px;color:#333;left:256.8px;transform:translateX(-50%);">CR_ax</div>
<div class="t" style="top:477.66px;font-size:6.3px;line-height:7.88px;color:#333;left:298.4px;transform:translateX(-50%);">Λειτουργικότητα</div>
<div class="t" style="top:491.06px;font-size:6.3px;line-height:7.88px;color:#333;left:298.4px;transform:translateX(-50%);">CR_sls</div>
<div class="t" style="top:502.36px;font-size:6.3px;line-height:7.88px;color:#333;left:14.6px;transform:translateX(-100%);">1</div>
<div class="t" style="top:502.36px;font-size:6.3px;line-height:7.88px;color:#333;left:17px;">LA_1</div>
<div class="t" style="top:502.36px;font-size:6.3px;line-height:7.88px;color:#333;left:66.5px;">Κεραμίδια κολυμβητά-3</div>
<div class="t" style="top:502.36px;font-size:6.3px;line-height:7.88px;color:#333;left:143px;">0</div>
<svg class="b" style="left:169.4px;top:502.8px" width="6.6" height="6.6" viewBox="0 0 7 7"><rect x=".2" y=".2" width="6.6" height="6.6" rx=".8" fill="#3fae49"/><rect x=".9" y=".9" width="5.2" height="5.2" rx=".5" fill="#6ccf6f"/><path d="M1.8 3.6L3 4.9L5.3 2" fill="none" stroke="#fff" stroke-width="1"/></svg>
<div class="t" style="top:502.36px;font-size:6.3px;line-height:7.88px;color:#333;left:202px;transform:translateX(-100%);">0.77</div>
<svg class="b" style="left:205px;top:502.8px" width="6.6" height="6.6" viewBox="0 0 7 7"><rect x=".2" y=".2" width="6.6" height="6.6" rx=".8" fill="#3fae49"/><rect x=".9" y=".9" width="5.2" height="5.2" rx=".5" fill="#6ccf6f"/><path d="M1.8 3.6L3 4.9L5.3 2" fill="none" stroke="#fff" stroke-width="1"/></svg>
<div class="t" style="top:502.36px;font-size:6.3px;line-height:7.88px;color:#333;left:241.8px;transform:translateX(-100%);">0.34</div>
<svg class="b" style="left:245px;top:502.8px" width="6.6" height="6.6" viewBox="0 0 7 7"><rect x=".2" y=".2" width="6.6" height="6.6" rx=".8" fill="#3fae49"/><rect x=".9" y=".9" width="5.2" height="5.2" rx=".5" fill="#6ccf6f"/><path d="M1.8 3.6L3 4.9L5.3 2" fill="none" stroke="#fff" stroke-width="1"/></svg>
<div class="t" style="top:502.36px;font-size:6.3px;line-height:7.88px;color:#333;left:269.2px;transform:translateX(-100%);">0.01</div>
<svg class="b" style="left:272px;top:502.8px" width="6.6" height="6.6" viewBox="0 0 7 7"><rect x=".2" y=".2" width="6.6" height="6.6" rx=".8" fill="#3fae49"/><rect x=".9" y=".9" width="5.2" height="5.2" rx=".5" fill="#6ccf6f"/><path d="M1.8 3.6L3 4.9L5.3 2" fill="none" stroke="#fff" stroke-width="1"/></svg>
<div class="t" style="top:502.36px;font-size:6.3px;line-height:7.88px;color:#333;left:325px;transform:translateX(-100%);">0.09</div>
<div class="t" style="top:511.76px;font-size:6.3px;line-height:7.88px;color:#333;left:14.6px;transform:translateX(-100%);">2</div>
<div class="t" style="top:511.76px;font-size:6.3px;line-height:7.88px;color:#333;left:17px;">LA_1</div>
<div class="t" style="top:511.76px;font-size:6.3px;line-height:7.88px;color:#333;left:66.5px;">Κεραμίδια κολυμβητά-3</div>
<div class="t" style="top:511.76px;font-size:6.3px;line-height:7.88px;color:#333;left:143px;">1</div>
<svg class="b" style="left:169.4px;top:512.2px" width="6.6" height="6.6" viewBox="0 0 7 7"><rect x=".2" y=".2" width="6.6" height="6.6" rx=".8" fill="#3fae49"/><rect x=".9" y=".9" width="5.2" height="5.2" rx=".5" fill="#6ccf6f"/><path d="M1.8 3.6L3 4.9L5.3 2" fill="none" stroke="#fff" stroke-width="1"/></svg>
<div class="t" style="top:511.76px;font-size:6.3px;line-height:7.88px;color:#333;left:202px;transform:translateX(-100%);">0.77</div>
<svg class="b" style="left:205px;top:512.2px" width="6.6" height="6.6" viewBox="0 0 7 7"><rect x=".2" y=".2" width="6.6" height="6.6" rx=".8" fill="#3fae49"/><rect x=".9" y=".9" width="5.2" height="5.2" rx=".5" fill="#6ccf6f"/><path d="M1.8 3.6L3 4.9L5.3 2" fill="none" stroke="#fff" stroke-width="1"/></svg>
<div class="t" style="top:511.76px;font-size:6.3px;line-height:7.88px;color:#333;left:241.8px;transform:translateX(-100%);">0.34</div>
<svg class="b" style="left:245px;top:512.2px" width="6.6" height="6.6" viewBox="0 0 7 7"><rect x=".2" y=".2" width="6.6" height="6.6" rx=".8" fill="#3fae49"/><rect x=".9" y=".9" width="5.2" height="5.2" rx=".5" fill="#6ccf6f"/><path d="M1.8 3.6L3 4.9L5.3 2" fill="none" stroke="#fff" stroke-width="1"/></svg>
<div class="t" style="top:511.76px;font-size:6.3px;line-height:7.88px;color:#333;left:269.2px;transform:translateX(-100%);">0.01</div>
<svg class="b" style="left:272px;top:512.2px" width="6.6" height="6.6" viewBox="0 0 7 7"><rect x=".2" y=".2" width="6.6" height="6.6" rx=".8" fill="#3fae49"/><rect x=".9" y=".9" width="5.2" height="5.2" rx=".5" fill="#6ccf6f"/><path d="M1.8 3.6L3 4.9L5.3 2" fill="none" stroke="#fff" stroke-width="1"/></svg>
<div class="t" style="top:511.76px;font-size:6.3px;line-height:7.88px;color:#333;left:325px;transform:translateX(-100%);">0.09</div>
<div class="t" style="top:521.16px;font-size:6.3px;line-height:7.88px;color:#333;left:14.6px;transform:translateX(-100%);">3</div>
<div class="t" style="top:521.16px;font-size:6.3px;line-height:7.88px;color:#333;left:17px;">LA_1</div>
<div class="t" style="top:521.16px;font-size:6.3px;line-height:7.88px;color:#333;left:66.5px;">Κεραμίδια κολυμβητά-3</div>
<div class="t" style="top:521.16px;font-size:6.3px;line-height:7.88px;color:#333;left:143px;">2</div>
<svg class="b" style="left:169.4px;top:521.6000000000001px" width="6.6" height="6.6" viewBox="0 0 7 7"><rect x=".2" y=".2" width="6.6" height="6.6" rx=".8" fill="#3fae49"/><rect x=".9" y=".9" width="5.2" height="5.2" rx=".5" fill="#6ccf6f"/><path d="M1.8 3.6L3 4.9L5.3 2" fill="none" stroke="#fff" stroke-width="1"/></svg>
<div class="t" style="top:521.16px;font-size:6.3px;line-height:7.88px;color:#333;left:202px;transform:translateX(-100%);">0.77</div>
<svg class="b" style="left:205px;top:521.6000000000001px" width="6.6" height="6.6" viewBox="0 0 7 7"><rect x=".2" y=".2" width="6.6" height="6.6" rx=".8" fill="#3fae49"/><rect x=".9" y=".9" width="5.2" height="5.2" rx=".5" fill="#6ccf6f"/><path d="M1.8 3.6L3 4.9L5.3 2" fill="none" stroke="#fff" stroke-width="1"/></svg>
<div class="t" style="top:521.16px;font-size:6.3px;line-height:7.88px;color:#333;left:241.8px;transform:translateX(-100%);">0.28</div>
<svg class="b" style="left:245px;top:521.6000000000001px" width="6.6" height="6.6" viewBox="0 0 7 7"><rect x=".2" y=".2" width="6.6" height="6.6" rx=".8" fill="#3fae49"/><rect x=".9" y=".9" width="5.2" height="5.2" rx=".5" fill="#6ccf6f"/><path d="M1.8 3.6L3 4.9L5.3 2" fill="none" stroke="#fff" stroke-width="1"/></svg>
<div class="t" style="top:521.16px;font-size:6.3px;line-height:7.88px;color:#333;left:269.2px;transform:translateX(-100%);">0.01</div>
<svg class="b" style="left:272px;top:521.6000000000001px" width="6.6" height="6.6" viewBox="0 0 7 7"><rect x=".2" y=".2" width="6.6" height="6.6" rx=".8" fill="#3fae49"/><rect x=".9" y=".9" width="5.2" height="5.2" rx=".5" fill="#6ccf6f"/><path d="M1.8 3.6L3 4.9L5.3 2" fill="none" stroke="#fff" stroke-width="1"/></svg>
<div class="t" style="top:521.16px;font-size:6.3px;line-height:7.88px;color:#333;left:325px;transform:translateX(-100%);">0.21</div>
<div class="t" style="top:530.56px;font-size:6.3px;line-height:7.88px;color:#333;left:14.6px;transform:translateX(-100%);">4</div>
<div class="t" style="top:530.56px;font-size:6.3px;line-height:7.88px;color:#333;left:17px;">LA_1</div>
<div class="t" style="top:530.56px;font-size:6.3px;line-height:7.88px;color:#333;left:66.5px;">Κεραμίδια κολυμβητά-3</div>
<div class="t" style="top:530.56px;font-size:6.3px;line-height:7.88px;color:#333;left:143px;">3</div>
<svg class="b" style="left:169.4px;top:531.0px" width="6.6" height="6.6" viewBox="0 0 7 7"><rect x=".2" y=".2" width="6.6" height="6.6" rx=".8" fill="#3fae49"/><rect x=".9" y=".9" width="5.2" height="5.2" rx=".5" fill="#6ccf6f"/><path d="M1.8 3.6L3 4.9L5.3 2" fill="none" stroke="#fff" stroke-width="1"/></svg>
<div class="t" style="top:530.56px;font-size:6.3px;line-height:7.88px;color:#333;left:202px;transform:translateX(-100%);">0.77</div>
<svg class="b" style="left:205px;top:531.0px" width="6.6" height="6.6" viewBox="0 0 7 7"><rect x=".2" y=".2" width="6.6" height="6.6" rx=".8" fill="#3fae49"/><rect x=".9" y=".9" width="5.2" height="5.2" rx=".5" fill="#6ccf6f"/><path d="M1.8 3.6L3 4.9L5.3 2" fill="none" stroke="#fff" stroke-width="1"/></svg>
<div class="t" style="top:530.56px;font-size:6.3px;line-height:7.88px;color:#333;left:241.8px;transform:translateX(-100%);">0.28</div>
<svg class="b" style="left:245px;top:531.0px" width="6.6" height="6.6" viewBox="0 0 7 7"><rect x=".2" y=".2" width="6.6" height="6.6" rx=".8" fill="#3fae49"/><rect x=".9" y=".9" width="5.2" height="5.2" rx=".5" fill="#6ccf6f"/><path d="M1.8 3.6L3 4.9L5.3 2" fill="none" stroke="#fff" stroke-width="1"/></svg>
<div class="t" style="top:530.56px;font-size:6.3px;line-height:7.88px;color:#333;left:269.2px;transform:translateX(-100%);">0.01</div>
<svg class="b" style="left:272px;top:531.0px" width="6.6" height="6.6" viewBox="0 0 7 7"><rect x=".2" y=".2" width="6.6" height="6.6" rx=".8" fill="#3fae49"/><rect x=".9" y=".9" width="5.2" height="5.2" rx=".5" fill="#6ccf6f"/><path d="M1.8 3.6L3 4.9L5.3 2" fill="none" stroke="#fff" stroke-width="1"/></svg>
<div class="t" style="top:530.56px;font-size:6.3px;line-height:7.88px;color:#333;left:325px;transform:translateX(-100%);">0.21</div>
<div class="b" style="left:0px;top:571.8px;width:800px;height:13.4px;background:#dedede;"></div>
<div class="b" style="left:0px;top:572.3px;width:77.5px;height:12.9px;background:#fafafa;"></div>
<svg class="b" style="left:2.6px;top:574.6px" width="8" height="8" viewBox="0 0 8 8"><rect x=".4" y=".6" width="6.6" height="6" fill="#fdfdfd" stroke="#7f8fb0" stroke-width=".6"/><rect x=".4" y=".6" width="6.6" height="1.4" fill="#7d8fb5"/><rect x="4.6" y="4" width="2.6" height="3.4" fill="#c8372d"/></svg>
<div class="t" style="top:574.86px;font-size:6.3px;line-height:7.88px;color:#444;left:11px;">Παράθυρο Εργασίας 1</div>
<svg class="b" style="left:80.6px;top:574.6px" width="8" height="8" viewBox="0 0 8 8"><rect x=".4" y=".6" width="6.6" height="6" fill="#fdfdfd" stroke="#7f8fb0" stroke-width=".6"/><rect x=".4" y=".6" width="6.6" height="1.4" fill="#7d8fb5"/><rect x="4.6" y="4" width="2.6" height="3.4" fill="#c8372d"/></svg>
<div class="t" style="top:574.86px;font-size:6.3px;line-height:7.88px;color:#666;left:90px;">Παράθυρο Εργασίας 2</div>
<svg class="b" style="left:160.6px;top:574.4px" width="8" height="8" viewBox="0 0 8 8"><path d="M.6 4L4 .8L7.4 4M1.6 3.6V7.2H6.4V3.6" fill="#fff7e0" stroke="#a07828" stroke-width=".7"/><rect x="3.3" y="4.8" width="1.4" height="2.4" fill="#a07828"/></svg>
<div class="t" style="top:574.86px;font-size:6.3px;line-height:7.88px;color:#666;left:170px;">Βοήθεια</div>
<div class="b" style="left:326.2px;top:235px;width:444.6px;height:352px;background:#e6e6e6;border:1px solid #cfcfcf;box-shadow:0 0 2px rgba(0,0,0,.18);"></div>
<div class="t" style="top:240.93px;font-size:11px;line-height:13.75px;color:#444;left:330px;">Εμφ. Αποτελ.</div>
<svg class="b" style="left:761.6px;top:244.6px" width="4.6" height="4.6" viewBox="0 0 5 5"><path d="M.5 .5L4.5 4.5M4.5 .5L.5 4.5" stroke="#666" stroke-width=".8"/></svg>
<div class="b" style="left:327.2px;top:256.3px;width:442.6px;height:13.4px;background:#f1f1f1;"></div>
<svg class="b" style="left:336.2px;top:259.4px" width="7" height="6.4" viewBox="0 0 7 6.4"><rect x=".4" y=".4" width="6" height="5.4" fill="#fff" stroke="#4f6fb0" stroke-width=".7"/><rect x=".4" y=".4" width="6" height="1.4" fill="#4f6fb0"/><path d="M.4 3.6h6M3.4 1.8v4" stroke="#8fa6d0" stroke-width=".4"/></svg>
<div class="t" style="top:258.5px;font-size:6.55px;line-height:8.19px;color:#555;left:345.2px;">Πίνακας Αποτελεσμάτων</div>
<div class="b" style="left:422.6px;top:258px;width:0.7px;height:10px;background:#e2e2e2;"></div>
<svg class="b" style="left:427.6px;top:260.2px" width="4.4" height="5" viewBox="0 0 4.4 5"><path d="M.5 .5L3.8 2.5L.5 4.5" fill="none" stroke="#7fb87f" stroke-width=".9"/></svg>
<div class="t" style="top:258.66px;font-size:6.3px;line-height:7.88px;color:#c2c2c2;left:436.6px;">Έλεγχος</div>
<div class="b" style="left:466.6px;top:257.4px;width:34.4px;height:10.8px;background:#d2d2d2;"></div>
<div class="t" style="top:258.54px;font-size:6.5px;line-height:8.12px;color:#333;left:468.4px;">Συνοπτικά</div>
<div class="t" style="top:258.66px;font-size:6.3px;line-height:7.88px;color:#555;left:503.4px;">Αναλυτικά</div>
<div class="b" style="left:541.4px;top:257.2px;width:56.4px;height:11px;background:#fff;border:.6px solid #d0d0d0;"></div>
<div class="t" style="top:258.73px;font-size:6.2px;line-height:7.75px;color:#666;left:545px;">Όλες οι Θέσεις</div>
<svg class="b" style="left:591.6px;top:261.4px" width="4" height="3" viewBox="0 0 4 3"><path d="M.3 .3L2 2.2L3.7 .3" fill="none" stroke="#888" stroke-width=".6"/></svg>
<svg class="b" style="left:605.4px;top:258.8px" width="7.6" height="7.6" viewBox="0 0 8 8"><circle cx="4" cy="4" r="3.6" fill="#2c5fd8"/><circle cx="3.2" cy="3" r="1.4" fill="#5f8cf0" opacity=".7"/></svg>
<div class="b" style="left:615.6px;top:257.4px;width:11px;height:10.8px;background:#d2d2d2;"></div>
<svg class="b" style="left:617.2px;top:258.8px" width="7.6" height="7.6" viewBox="0 0 8 8"><circle cx="4" cy="4" r="3.6" fill="#38b060"/><path d="M.5 4h7M4 .5v7" stroke="#bfe8c8" stroke-width=".6"/></svg>
<svg class="b" style="left:633.6px;top:258.2px" width="6.4" height="8.6" viewBox="0 0 6.4 8.6"><circle cx="3.2" cy="2.4" r="2" fill="#6b4a18"/><circle cx="3.2" cy="2" r=".7" fill="#f1f1f1"/><path d="M3.2 4v4.2M3.2 6h1.6M3.2 7.6h1.4" stroke="#6b4a18" stroke-width="1"/></svg>
<div class="t" style="top:258.66px;font-size:6.3px;line-height:7.88px;color:#555;left:642.8px;">Συντομογραφίες</div>
<div class="b" style="left:694.4px;top:257.8px;width:9.4px;height:9.6px;background:#cfe3d2;"></div>
<div class="t" style="top:259.1px;font-size:5.6px;line-height:7.0px;color:#3f7f50;left:699px;transform:translateX(-50%);font-style:italic;">fx</div>
<div class="b" style="left:328.6px;top:269.6px;width:440.2px;height:317px;background:#fff;"></div>
<svg class="b" style="left:761.6px;top:272.8px" width="5" height="4" viewBox="0 0 5 4"><path d="M2.5 .4L4.8 3.6H.2Z" fill="#777"/></svg>
<svg class="b" style="left:761.6px;top:580.4px" width="5" height="4" viewBox="0 0 5 4"><path d="M2.5 3.6L4.8 .4H.2Z" fill="#777"/></svg>
<div class="b" style="left:763.4px;top:336.5px;width:3.2px;height:81.5px;background:#8a8a8a;border-radius:1.6px;"></div>
<div class="m" style="left:332.8px;top:269.70px;font-size:6.9px;line-height:8.6px;letter-spacing:-0.32px;color:#3a3a3a;">       5. γg·G + γq·S + γq·ψ0·Q + γq·ψ0·Wpr / κατηγ. διαρκ. φόρτισης: "Στιγμιαία"</div>
<div class="m" style="left:332.8px;top:277.70px;font-size:6.9px;line-height:8.6px;letter-spacing:-0.32px;color:#3a3a3a;">       6. γg·G + γq·Wpr + γq·ψ0·Q + γq·ψ0·S / κατηγ. διαρκ. φόρτισης: "Στιγμιαία"</div>
<div class="m" style="left:332.8px;top:285.70px;font-size:6.9px;line-height:8.6px;letter-spacing:-0.32px;color:#3a3a3a;">       7. G + γq·Wsu (μόνο αν w_su &lt; 0.0)   / κατηγ. διαρκ. φόρτισης: "Στιγμιαία"</div>
<div class="m" style="left:332.8px;top:301.70px;font-size:6.9px;line-height:8.6px;letter-spacing:-0.32px;color:#3a3a3a;">( ). Συντελεστές ξύλινων στοιχείων</div>
<div class="m" style="left:332.8px;top:317.70px;font-size:6.9px;line-height:8.6px;letter-spacing:-0.32px;color:#3a3a3a;">    +. Κατηγορία Λειτουργίας                   : Κατηγορία Λειτουργίας 1 (EK5, § 2.3.1.3)</div>
<div class="m" style="left:332.8px;top:325.70px;font-size:6.9px;line-height:8.6px;letter-spacing:-0.32px;color:#3a3a3a;">    +. Συντελεστές Ασφαλείας Υλικού            : γM = 1.30  (EK5, Πίνακας 2.3)</div>
<div class="m" style="left:332.8px;top:333.70px;font-size:6.9px;line-height:8.6px;letter-spacing:-0.32px;color:#3a3a3a;">    +. Αυξητικός συντελεστής αντοχής συστήματος: ksys = 1.00  (EK5, § 6.6)</div>
<div class="m" style="left:332.8px;top:349.70px;font-size:6.9px;line-height:8.6px;letter-spacing:-0.32px;color:#3a3a3a;">( ). Έλεγχος σε Αξονική Δύναμη (EK5 EN1995-1-1, § 6.1.2 &amp; 6.1.4)</div>
<div class="m" style="left:332.8px;top:365.70px;font-size:6.9px;line-height:8.6px;letter-spacing:-0.32px;color:#3a3a3a;">     Συνδυασμός Φόρτισης: γg·G</div>
<div class="m" style="left:332.8px;top:373.70px;font-size:6.9px;line-height:8.6px;letter-spacing:-0.32px;color:#3a3a3a;">     Θέση               : Αρχή</div>
<div class="m" style="left:332.8px;top:381.70px;font-size:6.9px;line-height:8.6px;letter-spacing:-0.32px;color:#3a3a3a;">     Αξονική Δύναμη     : NEd = 0.00 kN</div>
<div class="m" style="left:332.8px;top:391.24px;font-size:6.9px;line-height:8.6px;letter-spacing:-0.32px;color:#3a3a3a;">     CR = σEd / σRd = 0.000 / 14.000 = 0.00</div>
<svg class="b" style="left:505.3px;top:389.0px" width="7.2" height="7.2" viewBox="0 0 7 7"><rect x=".2" y=".2" width="6.6" height="6.6" rx=".6" fill="#3a9a3f"/><rect x=".9" y=".9" width="5.2" height="5.2" rx=".4" fill="#62c466"/><path d="M1.8 3.6L3 4.9L5.3 2" fill="none" stroke="#fff" stroke-width="1"/></svg>
<div class="m" style="left:332.8px;top:406.77px;font-size:6.9px;line-height:8.6px;letter-spacing:-0.32px;color:#3a3a3a;">( ). Έλεγχος σε Διάτμηση (EK5 EN1995-1-1, § 6.1.7)</div>
<div class="m" style="left:332.8px;top:422.77px;font-size:6.9px;line-height:8.6px;letter-spacing:-0.32px;color:#3a3a3a;">     Συνδυασμός Φόρτισης: γg·G + γq·Qw</div>
<div class="m" style="left:332.8px;top:430.77px;font-size:6.9px;line-height:8.6px;letter-spacing:-0.32px;color:#3a3a3a;">     Θέση               : Αρχή</div>
<div class="m" style="left:332.8px;top:438.77px;font-size:6.9px;line-height:8.6px;letter-spacing:-0.32px;color:#3a3a3a;">     Τέμνουσα Δύναμη    : VEd,2 = 1.01 kN, VEd,3 = 0.41 kN</div>
<div class="m" style="left:332.8px;top:448.31px;font-size:6.9px;line-height:8.6px;letter-spacing:-0.32px;color:#3a3a3a;">     CR_2 = τEd,2 / τRd,2 = 0.284 / 1.923 = 0.15</div>
<svg class="b" style="left:524.4px;top:446.1px" width="7.2" height="7.2" viewBox="0 0 7 7"><rect x=".2" y=".2" width="6.6" height="6.6" rx=".6" fill="#3a9a3f"/><rect x=".9" y=".9" width="5.2" height="5.2" rx=".4" fill="#62c466"/><path d="M1.8 3.6L3 4.9L5.3 2" fill="none" stroke="#fff" stroke-width="1"/></svg>
<div class="m" style="left:332.8px;top:457.38px;font-size:6.9px;line-height:8.6px;letter-spacing:-0.32px;color:#3a3a3a;">     CR_3 = τEd,3 / τRd,3 = 0.115 / 1.923 = 0.06</div>
<svg class="b" style="left:524.4px;top:455.2px" width="7.2" height="7.2" viewBox="0 0 7 7"><rect x=".2" y=".2" width="6.6" height="6.6" rx=".6" fill="#3a9a3f"/><rect x=".9" y=".9" width="5.2" height="5.2" rx=".4" fill="#62c466"/><path d="M1.8 3.6L3 4.9L5.3 2" fill="none" stroke="#fff" stroke-width="1"/></svg>
<div class="m" style="left:332.8px;top:466.44px;font-size:6.9px;line-height:8.6px;letter-spacing:-0.32px;color:#3a3a3a;">     CR_biax = (CR_2)^2 + (CR_3)^2 = 0.03</div>
<svg class="b" style="left:501.5px;top:464.2px" width="7.2" height="7.2" viewBox="0 0 7 7"><rect x=".2" y=".2" width="6.6" height="6.6" rx=".6" fill="#3a9a3f"/><rect x=".9" y=".9" width="5.2" height="5.2" rx=".4" fill="#62c466"/><path d="M1.8 3.6L3 4.9L5.3 2" fill="none" stroke="#fff" stroke-width="1"/></svg>
<div class="m" style="left:332.8px;top:481.98px;font-size:6.9px;line-height:8.6px;letter-spacing:-0.32px;color:#3a3a3a;">( ). Έλεγχος σε συνδυασμό Κάμψης και Αξονικής (EK5 EN1995-1-1, § 6.2.3 &amp; 6.2.4)</div>
<div class="m" style="left:332.8px;top:497.98px;font-size:6.9px;line-height:8.6px;letter-spacing:-0.32px;color:#3a3a3a;">     Συνδυασμός Φόρτισης: γg·G + γq·Qw</div>
<div class="m" style="left:332.8px;top:505.98px;font-size:6.9px;line-height:8.6px;letter-spacing:-0.32px;color:#3a3a3a;">     Θέση               : Μέση</div>
<div class="m" style="left:332.8px;top:513.98px;font-size:6.9px;line-height:8.6px;letter-spacing:-0.32px;color:#3a3a3a;">     Εντατικά Μεγέθη    : NEd = 0.00 kN, MEd,2 = 0.17 kNm, MEd,3 = 0.43 kNm</div>
<div class="m" style="left:332.8px;top:521.98px;font-size:6.9px;line-height:8.6px;letter-spacing:-0.32px;color:#3a3a3a;">     Τάσεις Σχεδιασμού  : σEd = 0.00 N/mm2, σMEd,2 = 1.62 N/mm2, σMEd,3 = 3.21 N/mm2</div>
<div class="m" style="left:332.8px;top:529.98px;font-size:6.9px;line-height:8.6px;letter-spacing:-0.32px;color:#3a3a3a;">     Αντοχές Σχεδιασμού : f,0,d = 14.00 N/mm2, fm,y,d = 24.00 N/mm2, fm,z,d = 24.00 N/mm2</div>
<div class="m" style="left:332.8px;top:539.51px;font-size:6.9px;line-height:8.6px;letter-spacing:-0.32px;color:#3a3a3a;">     CR_2 = 0.16</div>
<svg class="b" style="left:402.2px;top:537.3px" width="7.2" height="7.2" viewBox="0 0 7 7"><rect x=".2" y=".2" width="6.6" height="6.6" rx=".6" fill="#3a9a3f"/><rect x=".9" y=".9" width="5.2" height="5.2" rx=".4" fill="#62c466"/><path d="M1.8 3.6L3 4.9L5.3 2" fill="none" stroke="#fff" stroke-width="1"/></svg>
<div class="m" style="left:332.8px;top:548.59px;font-size:6.9px;line-height:8.6px;letter-spacing:-0.32px;color:#3a3a3a;">     CR_3 = 0.18</div>
<svg class="b" style="left:402.2px;top:546.4px" width="7.2" height="7.2" viewBox="0 0 7 7"><rect x=".2" y=".2" width="6.6" height="6.6" rx=".6" fill="#3a9a3f"/><rect x=".9" y=".9" width="5.2" height="5.2" rx=".4" fill="#62c466"/><path d="M1.8 3.6L3 4.9L5.3 2" fill="none" stroke="#fff" stroke-width="1"/></svg>
<div class="m" style="left:332.8px;top:564.12px;font-size:6.9px;line-height:8.6px;letter-spacing:-0.32px;color:#3a3a3a;">( ). Έλεγχος Λειτουργικότητας (EK5 EN1995-1-1, § 7.2)</div>
<div class="m" style="left:332.8px;top:580.12px;font-size:6.9px;line-height:8.6px;letter-spacing:-0.32px;color:#3a3a3a;">     Θέση    Συνδυασμός Φόρτισης                   w_max       l/α    CR</div>
<div class="b" style="left:0px;top:585.2px;width:1024px;height:12.8px;background:#f0f0f0;"></div>
<div class="t" style="top:587.67px;font-size:6.6px;line-height:8.25px;color:#555;left:4px;">www.tol.com.gr</div>
<svg class="b" style="left:243px;top:587.8px" width="10" height="8" viewBox="0 0 10 8"><rect x=".5" y=".5" width="7.4" height="6.6" fill="#e6eefb" stroke="#5f7fc0" stroke-width=".7"/><rect x=".5" y=".5" width="7.4" height="1.6" fill="#5f7fc0"/></svg>
<svg class="b" style="left:254px;top:590.8px" width="4" height="3" viewBox="0 0 4 3"><path d="M0 0h4L2 2.6z" fill="#777"/></svg>
<svg class="b" style="left:259.5px;top:588px" width="9" height="8" viewBox="0 0 9 8"><rect x=".4" y=".4" width="8.2" height="6.8" fill="#dfe8f8" stroke="#5f7fc0" stroke-width=".6"/><path d="M1.6 2.2h1M3.6 2.2h4M1.6 3.8h1M3.6 3.8h4M1.6 5.4h1M3.6 5.4h4" stroke="#3f5fa8" stroke-width=".7"/></svg>
<div class="t" style="top:587.89px;font-size:6.25px;line-height:7.81px;color:#555;left:276.5px;letter-spacing:-.12px;">ΕΥΡΩΚΩΔΙΚΕΣ | Ιδιομορφική | Κ.Π.Μ. | q=3.50 | Σχεδιασμού | Τύπος 1</div>
<div class="t" style="top:587.94px;font-size:6.18px;line-height:7.72px;color:#555;left:521px;">Αποτίμηση-Ενισχύσεις | q-Καθολ.Συντ.Συμπ. | ΟΣ: ΕΚ8-3 | ΦΤ: ΚΑΔΕΤ</div>
<svg class="b" style="left:737.6px;top:587.2px" width="8" height="9" viewBox="0 0 8 9"><path d="M2.2 4V2.6a1.8 1.8 0 0 1 3.6 0V4" fill="none" stroke="#a88a30" stroke-width=".8"/><rect x="1" y="4" width="6" height="4.4" rx=".6" fill="#e8c24a" stroke="#a88a30" stroke-width=".5"/></svg>
<div class="t" style="top:587.86px;font-size:6.3px;line-height:7.88px;color:#555;left:843.6px;">κάναβος</div>
<svg class="b" style="left:872px;top:590.6px" width="4" height="3" viewBox="0 0 4 3"><path d="M.3 .3L2 2.2L3.7 .3" fill="none" stroke="#666" stroke-width=".6"/></svg>
<div class="b" style="left:877.5px;top:587px;width:15.5px;height:10px;background:#cfe0f4;border:.6px solid #7fa6d8;"></div>
<div class="t" style="top:587.86px;font-size:6.3px;line-height:7.88px;color:#445;left:885.2px;transform:translateX(-50%);">έλξη</div>
<div class="b" style="left:895.8px;top:587px;width:13.2px;height:10px;background:#cfe0f4;border:.6px solid #7fa6d8;"></div>
<div class="t" style="top:587.86px;font-size:6.3px;line-height:7.88px;color:#445;left:902.4px;transform:translateX(-50%);">dxf</div>
<div class="t" style="top:587.86px;font-size:6.3px;line-height:7.88px;color:#555;left:916.5px;transform:translateX(-50%);">έλξη</div>
<div class="t" style="top:587.86px;font-size:6.3px;line-height:7.88px;color:#555;left:929px;">κάθετα</div>
<div class="t" style="top:587.23px;font-size:7px;line-height:8.75px;color:#999;left:958px;transform:translateX(-50%);">−</div>
<div class="b" style="left:968px;top:591.4px;width:46px;height:0.8px;background:#c2c2c2;"></div>
<div class="b" style="left:987.6px;top:587.8px;width:2.8px;height:8px;background:#5a5a5a;"></div>
<div class="t" style="top:587.23px;font-size:7px;line-height:8.75px;color:#999;left:1020.5px;transform:translateX(-50%);">+</div>
<div class="b" style="left:846.4px;top:568.6px;width:10px;height:16.4px;background:#dedede;"></div>
<svg class="b" style="left:849.5px;top:573.6px" width="6" height="9" viewBox="0 0 6 9"><path d="M3.6 .4L1.4 4.6H3L2 8.6L4.8 3.6H3.2Z" fill="#f0c830" stroke="#c09a18" stroke-width=".3"/></svg>
<svg class="b" style="left:862px;top:574px" width="8.4" height="8.4" viewBox="0 0 8 8"><rect x=".5" y=".8" width="7" height="6.4" fill="#f4f6fa" stroke="#4f7fc8" stroke-width=".8"/><rect x="3.4" y="3.2" width="3.4" height="3.4" fill="#4f7fc8"/><path d="M1.4 2.6h3M1.4 4.2h1.4" stroke="#4f7fc8" stroke-width=".6"/></svg>
<svg class="b" style="left:875.5px;top:574px" width="8.4" height="8.4" viewBox="0 0 8 8"><rect x=".5" y=".8" width="7" height="6.4" fill="#f4f6fa" stroke="#3f9a58" stroke-width=".8"/><rect x="3.4" y="3.2" width="3.4" height="3.4" fill="#3f9a58"/><path d="M1.4 2.6h3M1.4 4.2h1.4" stroke="#3f9a58" stroke-width=".6"/></svg>
<svg class="b" style="left:888.5px;top:574px" width="8.4" height="8.4" viewBox="0 0 8 8"><rect x=".5" y=".8" width="7" height="6.4" fill="#f4f6fa" stroke="#c04f3f" stroke-width=".8"/><rect x="3.4" y="3.2" width="3.4" height="3.4" fill="#c04f3f"/><path d="M1.4 2.6h3M1.4 4.2h1.4" stroke="#c04f3f" stroke-width=".6"/></svg>
<svg class="b" style="left:902.5px;top:574px" width="8.4" height="8.4" viewBox="0 0 8 8"><rect x=".5" y=".8" width="7" height="6.4" fill="#f4f6fa" stroke="#7f5fa8" stroke-width=".8"/><rect x="3.4" y="3.2" width="3.4" height="3.4" fill="#7f5fa8"/><path d="M1.4 2.6h3M1.4 4.2h1.4" stroke="#7f5fa8" stroke-width=".6"/></svg>
<svg class="b" style="left:916px;top:574px" width="8.4" height="8.4" viewBox="0 0 8 8"><rect x=".5" y=".8" width="7" height="6.4" fill="#f4f6fa" stroke="#d88a30" stroke-width=".8"/><rect x="3.4" y="3.2" width="3.4" height="3.4" fill="#d88a30"/><path d="M1.4 2.6h3M1.4 4.2h1.4" stroke="#d88a30" stroke-width=".6"/></svg>
<svg class="b" style="left:929.5px;top:574px" width="8.4" height="8.4" viewBox="0 0 8 8"><rect x=".5" y=".8" width="7" height="6.4" fill="#f4f6fa" stroke="#b03030" stroke-width=".8"/><rect x="3.4" y="3.2" width="3.4" height="3.4" fill="#b03030"/><path d="M1.4 2.6h3M1.4 4.2h1.4" stroke="#b03030" stroke-width=".6"/></svg>
<svg class="b" style="left:944px;top:574px" width="8.4" height="8.4" viewBox="0 0 8 8"><rect x=".5" y=".8" width="7" height="6.4" fill="#f4f6fa" stroke="#4fa0d0" stroke-width=".8"/><rect x="3.4" y="3.2" width="3.4" height="3.4" fill="#4fa0d0"/><path d="M1.4 2.6h3M1.4 4.2h1.4" stroke="#4fa0d0" stroke-width=".6"/></svg>
<svg class="b" style="left:958.5px;top:574px" width="8.4" height="8.4" viewBox="0 0 8 8"><rect x=".5" y=".8" width="7" height="6.4" fill="#f4f6fa" stroke="#888" stroke-width=".8"/><rect x="3.4" y="3.2" width="3.4" height="3.4" fill="#888"/><path d="M1.4 2.6h3M1.4 4.2h1.4" stroke="#888" stroke-width=".6"/></svg>
<svg class="b" style="left:972px;top:574px" width="8.4" height="8.4" viewBox="0 0 8 8"><rect x=".5" y=".8" width="7" height="6.4" fill="#f4f6fa" stroke="#555" stroke-width=".8"/><rect x="3.4" y="3.2" width="3.4" height="3.4" fill="#555"/><path d="M1.4 2.6h3M1.4 4.2h1.4" stroke="#555" stroke-width=".6"/></svg>
<svg class="b" style="left:985.5px;top:574px" width="8.4" height="8.4" viewBox="0 0 8 8"><rect x=".5" y=".8" width="7" height="6.4" fill="#f4f6fa" stroke="#a8b8d0" stroke-width=".8"/><rect x="3.4" y="3.2" width="3.4" height="3.4" fill="#a8b8d0"/><path d="M1.4 2.6h3M1.4 4.2h1.4" stroke="#a8b8d0" stroke-width=".6"/></svg>
<svg class="b" style="left:1000px;top:574px" width="8.4" height="8.4" viewBox="0 0 8 8"><circle cx="4" cy="4" r="2.8" fill="none" stroke="#e04040" stroke-width="1.7" stroke-dasharray="2.9 2.9"/><circle cx="4" cy="4" r="2.8" fill="none" stroke="#38a050" stroke-width="1.7" stroke-dasharray="2.9 14.7" stroke-dashoffset="-2.9"/><circle cx="4" cy="4" r="2.8" fill="none" stroke="#3868d8" stroke-width="1.7" stroke-dasharray="2.9 14.7" stroke-dashoffset="-8.8"/></svg>
<svg class="b" style="left:1015px;top:574px" width="5" height="9" viewBox="0 0 5 9"><path d="M.6 1.2h3.8M.6 3L2.5 5L4.4 3" fill="none" stroke="#666" stroke-width=".7"/></svg>
</body></html>
